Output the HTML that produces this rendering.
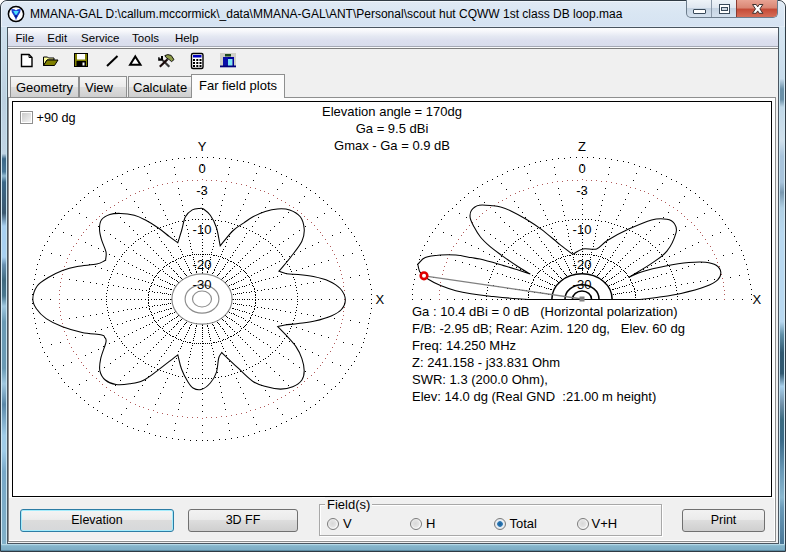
<!DOCTYPE html>
<html><head><meta charset="utf-8">
<style>
*{margin:0;padding:0;box-sizing:border-box}
html,body{width:786px;height:552px;overflow:hidden;background:#fff}
body{position:relative;font-family:"Liberation Sans",sans-serif;color:#000}
.abs{position:absolute}
#frame{position:absolute;left:0;top:0;width:786px;height:552px;border-radius:7px 7px 0 0;background:linear-gradient(to bottom,#e0eaf5 0,#d9e6f3 12px,#d6e3f2 25px,#eaf2fa 26px,#eaf2fa 27px);border:1px solid #2f3a44;overflow:hidden}
#frame .hl{position:absolute;left:0;top:0;right:0;bottom:0;border:1px solid #eef5fb;border-radius:6px 6px 0 0}
.fl{position:absolute;top:27px;width:6px;height:517px}
#fb{position:absolute;left:1px;top:544px;width:784px;height:7px;background:linear-gradient(to bottom,#c4e4f0 0,#86b6cc 25%,#7eaec6 80%,#4a7890 100%)}
#client{position:absolute;left:7px;top:27px;width:772px;height:517px;background:#f0f0f0;border:1px solid #4a5560}
#title{position:absolute;left:30px;top:7px;font-size:12px;color:#000;white-space:nowrap;letter-spacing:0}
#menubar{position:absolute;left:8px;top:28px;width:770px;height:21px;
 background:linear-gradient(to bottom,#fefefe 0,#f6f7fb 15%,#e4e8f2 40%,#dcdfee 60%,#d9ddec 85%,#a4a8b4 85.7%,#a4a8b4 90.4%,#fafafa 90.5%,#fafafa 95.2%,#7c7c7c 95.3%,#7c7c7c 100%)}
.mi{position:absolute;top:4px;font-size:11.5px;color:#000;white-space:nowrap}
.tab{position:absolute;top:76px;height:21px;border:1px solid #8e8f8f;border-bottom:none;
 background:linear-gradient(to bottom,#f6f6f6 0,#ebebeb 50%,#dddddd 51%,#cfcfcf 100%);font-size:13px;padding-top:2px;white-space:nowrap}
.tab span{position:absolute;top:3px}
#tabsel{position:absolute;top:74px;height:24px;left:191px;width:94px;border:1px solid #8e8f8f;border-bottom:none;background:#fcfcfc;font-size:13px;z-index:3}
#page{position:absolute;left:8px;top:97px;width:768px;height:445px;border:1px solid #8e8f8f;background:linear-gradient(to bottom,#fdfdfd 0,#fdfdfd 400px,#f0f0f0 400px,#f0f0f0 100%);box-shadow:inset -1px -1px 0 #fff}
#panel{position:absolute;left:12px;top:101px;width:760px;height:396px;border:1px solid #000;background:#fff}
svg{position:absolute;left:0;top:0}
.lbl{position:absolute;width:60px;text-align:center;font-size:13px;line-height:15px;background:transparent}
.lblx{position:absolute;font-size:13px;line-height:15px}
.hdr{position:absolute;left:292px;width:200px;text-align:center;font-size:13px;line-height:15px;white-space:nowrap}
.info{position:absolute;left:412px;font-size:13px;line-height:15px;white-space:nowrap}
.btn{position:absolute;top:509px;height:23px;border:1px solid #707070;border-radius:3px;
 background:linear-gradient(to bottom,#f2f2f2 0,#ebebeb 45%,#dddddd 50%,#cfcfcf 100%);font-size:12.5px;text-align:center;line-height:20px}
.radio{position:absolute;top:517.5px;width:12px;height:12px;border-radius:50%;border:1px solid #7a7a7a;background:radial-gradient(circle at 45% 45%,#d8d8d8 0,#e4e4e4 45%,#f8f8f8 62%,#f0f0f0 100%)}
.rl{position:absolute;top:516px;font-size:13px;line-height:15px}
</style></head><body>
<div id="frame"><div class="hl"></div></div>
<div class="fl" style="left:1px;border-left:1px solid #d0e6f2;border-right:1px solid #c8e4f0;background:linear-gradient(to bottom,#d0e0ee 0,#bcd0e0 14%,#c0d4e4 24.5%,#3c6888 25.5%,#4a7898 28%,#90b8d0 28.8%,#3c6888 30%,#3a5870 36%,#a8d0f0 38.5%,#a8d0f0 44.5%,#6890b0 46%,#406a80 49%,#4a7890 52%,#a0c8e0 54%,#6a9ab4 57%,#6a9ab4 66%,#a0c8e0 69%,#5a88a8 73%,#a0cce8 79%,#a0cce8 82%,#78a8c8 86%,#80b0c8 100%)"></div>
<div class="fl" style="left:779px;border-left:1px solid #c8e4f0;border-right:1px solid #d0e6f2;background:linear-gradient(to bottom,#d8e6f2 0,#c8dcec 10%,#6a90a8 12%,#6a90a8 14%,#c0d8e8 15.5%,#d0e0ec 22%,#a8c4dc 25%,#a8c4dc 30%,#7898b0 32%,#b0d0e4 35%,#b8d8f0 40%,#b8d8f0 57%,#6090a8 59.5%,#305870 63%,#305870 67%,#a8d0ec 69.5%,#7090a8 73%,#3a6a80 76%,#3a6a88 80%,#6a9ab8 86%,#8ab8d0 91%,#6a9ab8 93%,#4a7898 100%)"></div>
<div id="fb"></div>
<!-- app icon -->
<svg width="786" height="552" style="z-index:1">
 <circle cx="16" cy="14" r="7.6" fill="#fff" stroke="#000" stroke-width="1.5"/>
 <path d="M11.3,9 L14.3,9.3 L16,10.6 L17.7,9.3 L20.7,9 L20.2,12.3 L17.2,17.2 L16,20.2 L14.8,17.2 L11.8,12.3 Z" fill="#1a3fd0"/>
 <path d="M13.2,11 L18.8,11 L16.6,14.8 L15.4,14.8 Z" fill="#48e0ff"/>
 <circle cx="16" cy="16.3" r="1.2" fill="#0a1a80"/>
</svg>
<div id="title">MMANA-GAL D:\callum.mccormick\_data\MMANA-GAL\ANT\Personal\scout hut CQWW 1st class DB loop.maa</div>
<!-- caption buttons -->
<div class="abs" style="left:686px;top:0;width:92px;height:18px;border:1px solid #6c7c8c;border-top:none;border-radius:0 0 5px 5px;overflow:hidden;background:linear-gradient(to bottom,#eef3f8 0,#dfe7f0 45%,#c5d3e2 50%,#d5e1ee 100%)">
 <div class="abs" style="left:24px;top:0;width:1px;height:18px;background:#8a98a8"></div>
 <div class="abs" style="left:49px;top:0;width:43px;height:18px;border-left:1px solid #8a3a30;background:linear-gradient(to bottom,#e8a393 0,#d98573 45%,#c44a36 50%,#d9735d 100%)"></div>
 <div class="abs" style="left:6px;top:9px;width:13px;height:5px;background:#fff;border:1px solid #3a4a5a;border-radius:1px"></div>
 <div class="abs" style="left:32px;top:4px;width:11px;height:10px;background:#fff;border:1px solid #3a4a5a"></div>
 <div class="abs" style="left:34px;top:7px;width:7px;height:4px;background:#cfd8e2;border:1px solid #3a4a5a"></div>
</div>
<svg width="786" height="552" style="z-index:2">
  <path d="M752.5,4.5 H756.2 L757.7,6.9 L759.2,4.5 H762.9 L759.9,8.9 L762.9,13.3 H759.2 L757.7,10.9 L756.2,13.3 H752.5 L755.5,8.9 Z" fill="#fff" stroke="#40302e" stroke-width="1"/>
</svg>
<div id="client"></div>
<div id="menubar">
 <div class="mi" style="left:7.5px">File</div>
 <div class="mi" style="left:39.3px">Edit</div>
 <div class="mi" style="left:73.1px">Service</div>
 <div class="mi" style="left:124.1px">Tools</div>
 <div class="mi" style="left:166.9px">Help</div>
</div>
<!-- toolbar icons -->
<svg width="786" height="552" style="z-index:2">
 <!-- new -->
 <path d="M21.5,54.5 H29 L32,57.5 V66.5 H21.5 Z" fill="#fff" stroke="#000" stroke-width="1.4"/>
 <path d="M29,54.5 V57.5 H32" fill="none" stroke="#000" stroke-width="1"/>
 <!-- open -->
 <path d="M43.5,57 H47.5 L48.5,58 H54 V60 H47 L43.5,65.5 Z" fill="#ffff99" stroke="#000" stroke-width="1"/>
 <path d="M43.5,65.5 L47,60 H58 L54.5,65.5 Z" fill="#808000" stroke="#000" stroke-width="1"/>
 <!-- save -->
 <rect x="74.5" y="53.5" width="13" height="13" fill="#808000" stroke="#000" stroke-width="1"/>
 <rect x="77" y="54" width="8" height="5.5" fill="#fff"/>
 <rect x="76.5" y="61" width="9.5" height="5.5" fill="#000"/>
 <rect x="82.5" y="62.5" width="2" height="3" fill="#fff"/>
 <!-- line -->
 <path d="M107,66 L117.5,56" stroke="#000" stroke-width="2"/>
 <!-- triangle -->
 <path d="M135.3,56.5 L140.5,64.8 H130.1 Z" fill="#fff" stroke="#000" stroke-width="2"/>
 <!-- hammer & wrench -->
 <path d="M162.8,60.3 L169.3,66.8" stroke="#3a3a3a" stroke-width="2.2"/>
 <path d="M158.2,57.2 H159.6 V58.6 H161 V56 H163 V60.8 H158.2 Z" fill="#000"/>
 <path d="M167.6,59.2 L159.8,66.8" stroke="#1a0a0a" stroke-width="2.2"/>
 <path d="M164.8,55.6 L167.8,54.6 L171.2,55.4 L174,59.6 L171.6,61.6 L169.4,59.8 L166.2,57.6 Z" fill="#8c9a48" stroke="#000" stroke-width="0.9"/>
<!-- calc -->
 <rect x="191.5" y="53.5" width="11.5" height="15" rx="1.5" fill="#fff" stroke="#000" stroke-width="1.4"/>
 <rect x="193" y="55" width="8.5" height="2.5" fill="#0000c0"/>
 <g fill="#000"><rect x="193" y="59" width="2" height="2"/><rect x="196.3" y="59" width="2" height="2"/><rect x="199.5" y="59" width="2" height="2"/>
 <rect x="193" y="62" width="2" height="2"/><rect x="196.3" y="62" width="2" height="2"/><rect x="199.5" y="62" width="2" height="2"/>
 <rect x="193" y="65" width="2" height="2"/><rect x="196.3" y="65" width="2" height="2"/><rect x="199.5" y="65" width="2" height="2"/></g>
 <!-- exit -->
 <rect x="220" y="53" width="16" height="13" fill="#cfcfc6"/>
 <rect x="225" y="54" width="6" height="2.5" fill="#1e4a1e"/>
 <rect x="223" y="57" width="11" height="2" fill="#00009a"/>
 <rect x="223" y="57" width="5" height="9" fill="#0a10a8"/>
 <rect x="228" y="59" width="4.5" height="7" fill="#7ee6f4"/>
 <rect x="232.5" y="59" width="1.5" height="7" fill="#00009a"/>
 <rect x="220" y="65.5" width="16" height="1.8" fill="#00007a"/>
</svg>
<!-- tabs -->
<div id="page"></div>
<div class="tab" style="left:10px;width:69px"><span style="left:5px">Geometry</span></div>
<div class="tab" style="left:79px;width:48px"><span style="left:5px">View</span></div>
<div class="tab" style="left:128px;width:64px"><span style="left:4px">Calculate</span></div>
<div id="tabsel"><span class="abs" style="left:7px;top:3px">Far field plots</span></div>
<div id="panel"></div>
<svg width="786" height="552" style="z-index:4">
<path d="M32 289h1v1h-1zM32 294h1v1h-1zM32 299h1v1h-1zM32 303h1v1h-1zM32 308h1v1h-1zM33 284h1v1h-1zM33 313h1v1h-1zM34 279h1v1h-1zM34 318h1v1h-1zM35 274h1v1h-1zM35 323h1v1h-1zM36 269h1v1h-1zM36 328h1v1h-1zM37 264h1v1h-1zM37 333h1v1h-1zM39 259h1v1h-1zM39 338h1v1h-1zM40 255h1v1h-1zM40 342h1v1h-1zM41 299h1v1h-1zM42 250h1v1h-1zM42 347h1v1h-1zM44 245h1v1h-1zM44 275h1v1h-1zM44 322h1v1h-1zM44 352h1v1h-1zM47 241h1v1h-1zM47 356h1v1h-1zM49 236h1v1h-1zM49 361h1v1h-1zM50 299h1v1h-1zM51 253h1v1h-1zM51 344h1v1h-1zM52 232h1v1h-1zM52 365h1v1h-1zM53 277h1v1h-1zM53 320h1v1h-1zM55 228h1v1h-1zM55 369h1v1h-1zM58 224h1v1h-1zM58 373h1v1h-1zM59 299h1v1h-1zM60 255h1v1h-1zM60 342h1v1h-1zM61 219h1v1h-1zM61 278h1v1h-1zM61 319h1v1h-1zM61 378h1v1h-1zM63 232h1v1h-1zM63 365h1v1h-1zM64 215h1v1h-1zM64 382h1v1h-1zM67 258h1v1h-1zM67 299h1v1h-1zM67 339h1v1h-1zM68 211h1v1h-1zM68 386h1v1h-1zM69 279h1v1h-1zM69 318h1v1h-1zM71 235h1v1h-1zM71 362h1v1h-1zM72 208h1v1h-1zM72 389h1v1h-1zM74 299h1v1h-1zM75 260h1v1h-1zM75 337h1v1h-1zM76 204h1v1h-1zM76 280h1v1h-1zM76 317h1v1h-1zM76 393h1v1h-1zM78 239h1v1h-1zM78 358h1v1h-1zM79 213h1v1h-1zM79 384h1v1h-1zM80 200h1v1h-1zM80 397h1v1h-1zM82 262h1v1h-1zM82 299h1v1h-1zM82 335h1v1h-1zM83 281h1v1h-1zM83 316h1v1h-1zM84 197h1v1h-1zM84 400h1v1h-1zM85 242h1v1h-1zM85 355h1v1h-1zM86 217h1v1h-1zM86 380h1v1h-1zM88 193h1v1h-1zM88 299h1v1h-1zM88 404h1v1h-1zM89 264h1v1h-1zM89 333h1v1h-1zM90 282h1v1h-1zM90 315h1v1h-1zM91 245h1v1h-1zM91 352h1v1h-1zM92 222h1v1h-1zM92 375h1v1h-1zM93 190h1v1h-1zM93 407h1v1h-1zM95 266h1v1h-1zM95 299h1v1h-1zM95 331h1v1h-1zM96 283h1v1h-1zM96 314h1v1h-1zM97 187h1v1h-1zM97 410h1v1h-1zM98 226h1v1h-1zM98 248h1v1h-1zM98 349h1v1h-1zM98 371h1v1h-1zM99 196h1v1h-1zM99 401h1v1h-1zM101 268h1v1h-1zM101 299h1v1h-1zM101 329h1v1h-1zM102 184h1v1h-1zM102 284h1v1h-1zM102 313h1v1h-1zM102 413h1v1h-1zM103 251h1v1h-1zM103 346h1v1h-1zM104 202h1v1h-1zM104 230h1v1h-1zM104 367h1v1h-1zM104 395h1v1h-1zM106 293h1v1h-1zM106 296h1v1h-1zM106 299h1v1h-1zM106 301h1v1h-1zM106 304h1v1h-1zM107 181h1v1h-1zM107 270h1v1h-1zM107 287h1v1h-1zM107 290h1v1h-1zM107 307h1v1h-1zM107 310h1v1h-1zM107 327h1v1h-1zM107 416h1v1h-1zM108 282h1v1h-1zM108 285h1v1h-1zM108 312h1v1h-1zM108 315h1v1h-1zM109 254h1v1h-1zM109 279h1v1h-1zM109 318h1v1h-1zM109 343h1v1h-1zM110 207h1v1h-1zM110 234h1v1h-1zM110 277h1v1h-1zM110 320h1v1h-1zM110 363h1v1h-1zM110 390h1v1h-1zM111 274h1v1h-1zM111 323h1v1h-1zM112 179h1v1h-1zM112 271h1v1h-1zM112 299h1v1h-1zM112 326h1v1h-1zM112 418h1v1h-1zM113 269h1v1h-1zM113 285h1v1h-1zM113 312h1v1h-1zM113 328h1v1h-1zM114 256h1v1h-1zM114 266h1v1h-1zM114 331h1v1h-1zM114 341h1v1h-1zM115 212h1v1h-1zM115 238h1v1h-1zM115 359h1v1h-1zM115 385h1v1h-1zM116 264h1v1h-1zM116 333h1v1h-1zM117 176h1v1h-1zM117 261h1v1h-1zM117 273h1v1h-1zM117 299h1v1h-1zM117 324h1v1h-1zM117 336h1v1h-1zM117 421h1v1h-1zM118 286h1v1h-1zM118 311h1v1h-1zM119 259h1v1h-1zM119 338h1v1h-1zM120 217h1v1h-1zM120 241h1v1h-1zM120 356h1v1h-1zM120 380h1v1h-1zM121 183h1v1h-1zM121 256h1v1h-1zM121 299h1v1h-1zM121 341h1v1h-1zM121 414h1v1h-1zM122 174h1v1h-1zM122 254h1v1h-1zM122 274h1v1h-1zM122 323h1v1h-1zM122 343h1v1h-1zM122 423h1v1h-1zM123 287h1v1h-1zM123 310h1v1h-1zM124 222h1v1h-1zM124 244h1v1h-1zM124 252h1v1h-1zM124 261h1v1h-1zM124 336h1v1h-1zM124 345h1v1h-1zM124 353h1v1h-1zM124 375h1v1h-1zM126 189h1v1h-1zM126 250h1v1h-1zM126 276h1v1h-1zM126 299h1v1h-1zM126 321h1v1h-1zM126 347h1v1h-1zM126 408h1v1h-1zM127 171h1v1h-1zM127 288h1v1h-1zM127 309h1v1h-1zM127 426h1v1h-1zM128 247h1v1h-1zM128 263h1v1h-1zM128 334h1v1h-1zM128 350h1v1h-1zM129 226h1v1h-1zM129 371h1v1h-1zM130 195h1v1h-1zM130 277h1v1h-1zM130 299h1v1h-1zM130 320h1v1h-1zM130 402h1v1h-1zM131 245h1v1h-1zM131 288h1v1h-1zM131 309h1v1h-1zM131 352h1v1h-1zM132 265h1v1h-1zM132 332h1v1h-1zM133 169h1v1h-1zM133 230h1v1h-1zM133 243h1v1h-1zM133 250h1v1h-1zM133 347h1v1h-1zM133 354h1v1h-1zM133 367h1v1h-1zM133 428h1v1h-1zM134 201h1v1h-1zM134 278h1v1h-1zM134 299h1v1h-1zM134 319h1v1h-1zM134 396h1v1h-1zM135 241h1v1h-1zM135 289h1v1h-1zM135 308h1v1h-1zM135 356h1v1h-1zM136 253h1v1h-1zM136 267h1v1h-1zM136 330h1v1h-1zM136 344h1v1h-1zM137 234h1v1h-1zM137 363h1v1h-1zM138 167h1v1h-1zM138 207h1v1h-1zM138 239h1v1h-1zM138 279h1v1h-1zM138 299h1v1h-1zM138 318h1v1h-1zM138 358h1v1h-1zM138 390h1v1h-1zM138 430h1v1h-1zM139 289h1v1h-1zM139 308h1v1h-1zM140 238h1v1h-1zM140 255h1v1h-1zM140 269h1v1h-1zM140 328h1v1h-1zM140 342h1v1h-1zM140 359h1v1h-1zM141 299h1v1h-1zM142 212h1v1h-1zM142 280h1v1h-1zM142 290h1v1h-1zM142 307h1v1h-1zM142 317h1v1h-1zM142 385h1v1h-1zM143 236h1v1h-1zM143 270h1v1h-1zM143 327h1v1h-1zM143 361h1v1h-1zM144 166h1v1h-1zM144 241h1v1h-1zM144 258h1v1h-1zM144 339h1v1h-1zM144 356h1v1h-1zM144 431h1v1h-1zM145 217h1v1h-1zM145 234h1v1h-1zM145 281h1v1h-1zM145 299h1v1h-1zM145 316h1v1h-1zM145 363h1v1h-1zM145 380h1v1h-1zM146 272h1v1h-1zM146 290h1v1h-1zM146 307h1v1h-1zM146 325h1v1h-1zM147 173h1v1h-1zM147 244h1v1h-1zM147 260h1v1h-1zM147 337h1v1h-1zM147 353h1v1h-1zM147 424h1v1h-1zM148 221h1v1h-1zM148 233h1v1h-1zM148 282h1v1h-1zM148 292h1v1h-1zM148 294h1v1h-1zM148 295h1v1h-1zM148 297h1v1h-1zM148 299h1v1h-1zM148 300h1v1h-1zM148 302h1v1h-1zM148 303h1v1h-1zM148 305h1v1h-1zM148 315h1v1h-1zM148 364h1v1h-1zM148 376h1v1h-1zM149 164h1v1h-1zM149 273h1v1h-1zM149 288h1v1h-1zM149 289h1v1h-1zM149 291h1v1h-1zM149 306h1v1h-1zM149 308h1v1h-1zM149 309h1v1h-1zM149 324h1v1h-1zM149 433h1v1h-1zM150 180h1v1h-1zM150 247h1v1h-1zM150 262h1v1h-1zM150 286h1v1h-1zM150 311h1v1h-1zM150 335h1v1h-1zM150 350h1v1h-1zM150 417h1v1h-1zM151 226h1v1h-1zM151 231h1v1h-1zM151 283h1v1h-1zM151 285h1v1h-1zM151 299h1v1h-1zM151 312h1v1h-1zM151 314h1v1h-1zM151 366h1v1h-1zM151 371h1v1h-1zM152 275h1v1h-1zM152 282h1v1h-1zM152 291h1v1h-1zM152 306h1v1h-1zM152 315h1v1h-1zM152 322h1v1h-1zM153 187h1v1h-1zM153 250h1v1h-1zM153 264h1v1h-1zM153 279h1v1h-1zM153 280h1v1h-1zM153 317h1v1h-1zM153 318h1v1h-1zM153 333h1v1h-1zM153 347h1v1h-1zM153 410h1v1h-1zM154 230h1v1h-1zM154 277h1v1h-1zM154 284h1v1h-1zM154 292h1v1h-1zM154 299h1v1h-1zM154 305h1v1h-1zM154 313h1v1h-1zM154 320h1v1h-1zM154 367h1v1h-1zM155 162h1v1h-1zM155 193h1v1h-1zM155 266h1v1h-1zM155 276h1v1h-1zM155 321h1v1h-1zM155 331h1v1h-1zM155 404h1v1h-1zM155 435h1v1h-1zM156 253h1v1h-1zM156 275h1v1h-1zM156 299h1v1h-1zM156 322h1v1h-1zM156 344h1v1h-1zM157 228h1v1h-1zM157 233h1v1h-1zM157 273h1v1h-1zM157 285h1v1h-1zM157 292h1v1h-1zM157 305h1v1h-1zM157 312h1v1h-1zM157 324h1v1h-1zM157 364h1v1h-1zM157 369h1v1h-1zM158 199h1v1h-1zM158 255h1v1h-1zM158 268h1v1h-1zM158 272h1v1h-1zM158 277h1v1h-1zM158 320h1v1h-1zM158 325h1v1h-1zM158 329h1v1h-1zM158 342h1v1h-1zM158 398h1v1h-1zM159 237h1v1h-1zM159 271h1v1h-1zM159 286h1v1h-1zM159 299h1v1h-1zM159 311h1v1h-1zM159 326h1v1h-1zM159 360h1v1h-1zM160 161h1v1h-1zM160 204h1v1h-1zM160 227h1v1h-1zM160 270h1v1h-1zM160 279h1v1h-1zM160 292h1v1h-1zM160 305h1v1h-1zM160 318h1v1h-1zM160 327h1v1h-1zM160 370h1v1h-1zM160 393h1v1h-1zM160 436h1v1h-1zM161 241h1v1h-1zM161 258h1v1h-1zM161 286h1v1h-1zM161 299h1v1h-1zM161 311h1v1h-1zM161 339h1v1h-1zM161 356h1v1h-1zM162 269h1v1h-1zM162 280h1v1h-1zM162 293h1v1h-1zM162 304h1v1h-1zM162 317h1v1h-1zM162 328h1v1h-1zM163 210h1v1h-1zM163 226h1v1h-1zM163 260h1v1h-1zM163 267h1v1h-1zM163 271h1v1h-1zM163 326h1v1h-1zM163 330h1v1h-1zM163 337h1v1h-1zM163 371h1v1h-1zM163 387h1v1h-1zM164 244h1v1h-1zM164 266h1v1h-1zM164 287h1v1h-1zM164 293h1v1h-1zM164 299h1v1h-1zM164 304h1v1h-1zM164 310h1v1h-1zM164 331h1v1h-1zM164 353h1v1h-1zM165 215h1v1h-1zM165 262h1v1h-1zM165 273h1v1h-1zM165 281h1v1h-1zM165 316h1v1h-1zM165 324h1v1h-1zM165 335h1v1h-1zM165 382h1v1h-1zM166 160h1v1h-1zM166 225h1v1h-1zM166 247h1v1h-1zM166 265h1v1h-1zM166 288h1v1h-1zM166 293h1v1h-1zM166 299h1v1h-1zM166 304h1v1h-1zM166 309h1v1h-1zM166 332h1v1h-1zM166 350h1v1h-1zM166 372h1v1h-1zM166 437h1v1h-1zM167 219h1v1h-1zM167 264h1v1h-1zM167 274h1v1h-1zM167 282h1v1h-1zM167 315h1v1h-1zM167 323h1v1h-1zM167 333h1v1h-1zM167 378h1v1h-1zM168 250h1v1h-1zM168 288h1v1h-1zM168 294h1v1h-1zM168 299h1v1h-1zM168 303h1v1h-1zM168 309h1v1h-1zM168 347h1v1h-1zM169 224h1v1h-1zM169 263h1v1h-1zM169 266h1v1h-1zM169 276h1v1h-1zM169 283h1v1h-1zM169 314h1v1h-1zM169 321h1v1h-1zM169 331h1v1h-1zM169 334h1v1h-1zM169 373h1v1h-1zM170 252h1v1h-1zM170 262h1v1h-1zM170 284h1v1h-1zM170 289h1v1h-1zM170 294h1v1h-1zM170 299h1v1h-1zM170 303h1v1h-1zM170 308h1v1h-1zM170 313h1v1h-1zM170 335h1v1h-1zM170 345h1v1h-1zM171 228h1v1h-1zM171 255h1v1h-1zM171 268h1v1h-1zM171 277h1v1h-1zM171 289h1v1h-1zM171 299h1v1h-1zM171 308h1v1h-1zM171 320h1v1h-1zM171 329h1v1h-1zM171 342h1v1h-1zM171 369h1v1h-1zM172 159h1v1h-1zM172 223h1v1h-1zM172 232h1v1h-1zM172 261h1v1h-1zM172 278h1v1h-1zM172 284h1v1h-1zM172 294h1v1h-1zM172 303h1v1h-1zM172 313h1v1h-1zM172 319h1v1h-1zM172 336h1v1h-1zM172 365h1v1h-1zM172 374h1v1h-1zM172 438h1v1h-1zM173 257h1v1h-1zM173 261h1v1h-1zM173 270h1v1h-1zM173 290h1v1h-1zM173 307h1v1h-1zM173 327h1v1h-1zM173 336h1v1h-1zM173 340h1v1h-1zM174 167h1v1h-1zM174 236h1v1h-1zM174 271h1v1h-1zM174 279h1v1h-1zM174 285h1v1h-1zM174 312h1v1h-1zM174 318h1v1h-1zM174 326h1v1h-1zM174 361h1v1h-1zM174 430h1v1h-1zM175 174h1v1h-1zM175 222h1v1h-1zM175 260h1v1h-1zM175 286h1v1h-1zM175 311h1v1h-1zM175 337h1v1h-1zM175 375h1v1h-1zM175 423h1v1h-1zM176 239h1v1h-1zM176 259h1v1h-1zM176 262h1v1h-1zM176 273h1v1h-1zM176 280h1v1h-1zM176 317h1v1h-1zM176 324h1v1h-1zM176 335h1v1h-1zM176 338h1v1h-1zM176 358h1v1h-1zM177 181h1v1h-1zM177 242h1v1h-1zM177 274h1v1h-1zM177 281h1v1h-1zM177 316h1v1h-1zM177 323h1v1h-1zM177 355h1v1h-1zM177 416h1v1h-1zM178 158h1v1h-1zM178 188h1v1h-1zM178 221h1v1h-1zM178 246h1v1h-1zM178 258h1v1h-1zM178 264h1v1h-1zM178 276h1v1h-1zM178 282h1v1h-1zM178 315h1v1h-1zM178 321h1v1h-1zM178 333h1v1h-1zM178 339h1v1h-1zM178 351h1v1h-1zM178 376h1v1h-1zM178 409h1v1h-1zM178 439h1v1h-1zM179 194h1v1h-1zM179 266h1v1h-1zM179 331h1v1h-1zM179 403h1v1h-1zM180 249h1v1h-1zM180 258h1v1h-1zM180 268h1v1h-1zM180 277h1v1h-1zM180 320h1v1h-1zM180 329h1v1h-1zM180 339h1v1h-1zM180 348h1v1h-1zM181 200h1v1h-1zM181 251h1v1h-1zM181 257h1v1h-1zM181 269h1v1h-1zM181 278h1v1h-1zM181 319h1v1h-1zM181 328h1v1h-1zM181 340h1v1h-1zM181 346h1v1h-1zM181 397h1v1h-1zM182 205h1v1h-1zM182 221h1v1h-1zM182 254h1v1h-1zM182 279h1v1h-1zM182 318h1v1h-1zM182 343h1v1h-1zM182 376h1v1h-1zM182 392h1v1h-1zM183 211h1v1h-1zM183 256h1v1h-1zM183 271h1v1h-1zM183 326h1v1h-1zM183 341h1v1h-1zM183 386h1v1h-1zM184 158h1v1h-1zM184 215h1v1h-1zM184 259h1v1h-1zM184 273h1v1h-1zM184 324h1v1h-1zM184 338h1v1h-1zM184 382h1v1h-1zM184 439h1v1h-1zM185 220h1v1h-1zM185 256h1v1h-1zM185 261h1v1h-1zM185 274h1v1h-1zM185 323h1v1h-1zM185 336h1v1h-1zM185 341h1v1h-1zM185 377h1v1h-1zM186 225h1v1h-1zM186 263h1v1h-1zM186 275h1v1h-1zM186 277h1v1h-1zM186 320h1v1h-1zM186 322h1v1h-1zM186 334h1v1h-1zM186 372h1v1h-1zM187 229h1v1h-1zM187 255h1v1h-1zM187 265h1v1h-1zM187 332h1v1h-1zM187 342h1v1h-1zM187 368h1v1h-1zM188 220h1v1h-1zM188 233h1v1h-1zM188 236h1v1h-1zM188 267h1v1h-1zM188 330h1v1h-1zM188 361h1v1h-1zM188 364h1v1h-1zM188 377h1v1h-1zM189 240h1v1h-1zM189 255h1v1h-1zM189 269h1v1h-1zM189 270h1v1h-1zM189 327h1v1h-1zM189 328h1v1h-1zM189 342h1v1h-1zM189 357h1v1h-1zM190 157h1v1h-1zM190 243h1v1h-1zM190 246h1v1h-1zM190 255h1v1h-1zM190 272h1v1h-1zM190 325h1v1h-1zM190 342h1v1h-1zM190 351h1v1h-1zM190 354h1v1h-1zM190 440h1v1h-1zM191 249h1v1h-1zM191 273h1v1h-1zM191 275h1v1h-1zM191 322h1v1h-1zM191 324h1v1h-1zM191 348h1v1h-1zM192 219h1v1h-1zM192 252h1v1h-1zM192 254h1v1h-1zM192 343h1v1h-1zM192 345h1v1h-1zM192 378h1v1h-1zM193 257h1v1h-1zM193 259h1v1h-1zM193 338h1v1h-1zM193 340h1v1h-1zM194 254h1v1h-1zM194 261h1v1h-1zM194 263h1v1h-1zM194 334h1v1h-1zM194 336h1v1h-1zM194 343h1v1h-1zM195 219h1v1h-1zM195 265h1v1h-1zM195 267h1v1h-1zM195 269h1v1h-1zM195 328h1v1h-1zM195 330h1v1h-1zM195 332h1v1h-1zM195 378h1v1h-1zM196 157h1v1h-1zM196 254h1v1h-1zM196 271h1v1h-1zM196 272h1v1h-1zM196 274h1v1h-1zM196 323h1v1h-1zM196 325h1v1h-1zM196 326h1v1h-1zM196 343h1v1h-1zM196 440h1v1h-1zM198 219h1v1h-1zM198 254h1v1h-1zM198 343h1v1h-1zM198 378h1v1h-1zM200 254h1v1h-1zM200 343h1v1h-1zM202 157h1v1h-1zM202 165h1v1h-1zM202 172h1v1h-1zM202 179h1v1h-1zM202 186h1v1h-1zM202 192h1v1h-1zM202 198h1v1h-1zM202 204h1v1h-1zM202 209h1v1h-1zM202 214h1v1h-1zM202 219h1v1h-1zM202 223h1v1h-1zM202 228h1v1h-1zM202 232h1v1h-1zM202 235h1v1h-1zM202 239h1v1h-1zM202 242h1v1h-1zM202 245h1v1h-1zM202 248h1v1h-1zM202 251h1v1h-1zM202 254h1v1h-1zM202 256h1v1h-1zM202 259h1v1h-1zM202 261h1v1h-1zM202 263h1v1h-1zM202 265h1v1h-1zM202 267h1v1h-1zM202 269h1v1h-1zM202 270h1v1h-1zM202 272h1v1h-1zM202 273h1v1h-1zM202 324h1v1h-1zM202 325h1v1h-1zM202 327h1v1h-1zM202 328h1v1h-1zM202 330h1v1h-1zM202 332h1v1h-1zM202 334h1v1h-1zM202 336h1v1h-1zM202 338h1v1h-1zM202 341h1v1h-1zM202 343h1v1h-1zM202 346h1v1h-1zM202 349h1v1h-1zM202 352h1v1h-1zM202 355h1v1h-1zM202 358h1v1h-1zM202 362h1v1h-1zM202 365h1v1h-1zM202 369h1v1h-1zM202 374h1v1h-1zM202 378h1v1h-1zM202 383h1v1h-1zM202 388h1v1h-1zM202 393h1v1h-1zM202 399h1v1h-1zM202 405h1v1h-1zM202 411h1v1h-1zM202 418h1v1h-1zM202 425h1v1h-1zM202 432h1v1h-1zM202 440h1v1h-1zM203 254h1v1h-1zM203 343h1v1h-1zM205 219h1v1h-1zM205 254h1v1h-1zM205 343h1v1h-1zM205 378h1v1h-1zM207 157h1v1h-1zM207 254h1v1h-1zM207 271h1v1h-1zM207 272h1v1h-1zM207 274h1v1h-1zM207 323h1v1h-1zM207 325h1v1h-1zM207 326h1v1h-1zM207 343h1v1h-1zM207 440h1v1h-1zM208 219h1v1h-1zM208 265h1v1h-1zM208 267h1v1h-1zM208 269h1v1h-1zM208 328h1v1h-1zM208 330h1v1h-1zM208 332h1v1h-1zM208 378h1v1h-1zM209 254h1v1h-1zM209 261h1v1h-1zM209 263h1v1h-1zM209 334h1v1h-1zM209 336h1v1h-1zM209 343h1v1h-1zM210 257h1v1h-1zM210 259h1v1h-1zM210 338h1v1h-1zM210 340h1v1h-1zM211 219h1v1h-1zM211 252h1v1h-1zM211 254h1v1h-1zM211 343h1v1h-1zM211 345h1v1h-1zM211 378h1v1h-1zM212 249h1v1h-1zM212 273h1v1h-1zM212 275h1v1h-1zM212 322h1v1h-1zM212 324h1v1h-1zM212 348h1v1h-1zM213 157h1v1h-1zM213 243h1v1h-1zM213 246h1v1h-1zM213 255h1v1h-1zM213 272h1v1h-1zM213 325h1v1h-1zM213 342h1v1h-1zM213 351h1v1h-1zM213 354h1v1h-1zM213 440h1v1h-1zM214 240h1v1h-1zM214 255h1v1h-1zM214 269h1v1h-1zM214 270h1v1h-1zM214 327h1v1h-1zM214 328h1v1h-1zM214 342h1v1h-1zM214 357h1v1h-1zM215 220h1v1h-1zM215 233h1v1h-1zM215 236h1v1h-1zM215 267h1v1h-1zM215 330h1v1h-1zM215 361h1v1h-1zM215 364h1v1h-1zM215 377h1v1h-1zM216 229h1v1h-1zM216 255h1v1h-1zM216 265h1v1h-1zM216 332h1v1h-1zM216 342h1v1h-1zM216 368h1v1h-1zM217 225h1v1h-1zM217 263h1v1h-1zM217 275h1v1h-1zM217 277h1v1h-1zM217 320h1v1h-1zM217 322h1v1h-1zM217 334h1v1h-1zM217 372h1v1h-1zM218 220h1v1h-1zM218 256h1v1h-1zM218 261h1v1h-1zM218 274h1v1h-1zM218 323h1v1h-1zM218 336h1v1h-1zM218 341h1v1h-1zM218 377h1v1h-1zM219 158h1v1h-1zM219 215h1v1h-1zM219 259h1v1h-1zM219 273h1v1h-1zM219 324h1v1h-1zM219 338h1v1h-1zM219 382h1v1h-1zM219 439h1v1h-1zM220 211h1v1h-1zM220 256h1v1h-1zM220 271h1v1h-1zM220 326h1v1h-1zM220 341h1v1h-1zM220 386h1v1h-1zM221 205h1v1h-1zM221 221h1v1h-1zM221 254h1v1h-1zM221 279h1v1h-1zM221 318h1v1h-1zM221 343h1v1h-1zM221 376h1v1h-1zM221 392h1v1h-1zM222 200h1v1h-1zM222 251h1v1h-1zM222 257h1v1h-1zM222 269h1v1h-1zM222 278h1v1h-1zM222 319h1v1h-1zM222 328h1v1h-1zM222 340h1v1h-1zM222 346h1v1h-1zM222 397h1v1h-1zM223 249h1v1h-1zM223 258h1v1h-1zM223 268h1v1h-1zM223 277h1v1h-1zM223 320h1v1h-1zM223 329h1v1h-1zM223 339h1v1h-1zM223 348h1v1h-1zM224 194h1v1h-1zM224 266h1v1h-1zM224 331h1v1h-1zM224 403h1v1h-1zM225 158h1v1h-1zM225 188h1v1h-1zM225 221h1v1h-1zM225 246h1v1h-1zM225 258h1v1h-1zM225 264h1v1h-1zM225 276h1v1h-1zM225 282h1v1h-1zM225 315h1v1h-1zM225 321h1v1h-1zM225 333h1v1h-1zM225 339h1v1h-1zM225 351h1v1h-1zM225 376h1v1h-1zM225 409h1v1h-1zM225 439h1v1h-1zM226 181h1v1h-1zM226 242h1v1h-1zM226 274h1v1h-1zM226 281h1v1h-1zM226 316h1v1h-1zM226 323h1v1h-1zM226 355h1v1h-1zM226 416h1v1h-1zM227 239h1v1h-1zM227 259h1v1h-1zM227 262h1v1h-1zM227 273h1v1h-1zM227 280h1v1h-1zM227 317h1v1h-1zM227 324h1v1h-1zM227 335h1v1h-1zM227 338h1v1h-1zM227 358h1v1h-1zM228 174h1v1h-1zM228 222h1v1h-1zM228 260h1v1h-1zM228 286h1v1h-1zM228 311h1v1h-1zM228 337h1v1h-1zM228 375h1v1h-1zM228 423h1v1h-1zM229 167h1v1h-1zM229 236h1v1h-1zM229 271h1v1h-1zM229 279h1v1h-1zM229 285h1v1h-1zM229 312h1v1h-1zM229 318h1v1h-1zM229 326h1v1h-1zM229 361h1v1h-1zM229 430h1v1h-1zM230 257h1v1h-1zM230 261h1v1h-1zM230 270h1v1h-1zM230 290h1v1h-1zM230 307h1v1h-1zM230 327h1v1h-1zM230 336h1v1h-1zM230 340h1v1h-1zM231 159h1v1h-1zM231 223h1v1h-1zM231 232h1v1h-1zM231 261h1v1h-1zM231 278h1v1h-1zM231 284h1v1h-1zM231 294h1v1h-1zM231 303h1v1h-1zM231 313h1v1h-1zM231 319h1v1h-1zM231 336h1v1h-1zM231 365h1v1h-1zM231 374h1v1h-1zM231 438h1v1h-1zM232 228h1v1h-1zM232 255h1v1h-1zM232 268h1v1h-1zM232 277h1v1h-1zM232 289h1v1h-1zM232 299h1v1h-1zM232 308h1v1h-1zM232 320h1v1h-1zM232 329h1v1h-1zM232 342h1v1h-1zM232 369h1v1h-1zM233 252h1v1h-1zM233 262h1v1h-1zM233 284h1v1h-1zM233 289h1v1h-1zM233 294h1v1h-1zM233 299h1v1h-1zM233 303h1v1h-1zM233 308h1v1h-1zM233 313h1v1h-1zM233 335h1v1h-1zM233 345h1v1h-1zM234 224h1v1h-1zM234 263h1v1h-1zM234 266h1v1h-1zM234 276h1v1h-1zM234 283h1v1h-1zM234 314h1v1h-1zM234 321h1v1h-1zM234 331h1v1h-1zM234 334h1v1h-1zM234 373h1v1h-1zM235 250h1v1h-1zM235 288h1v1h-1zM235 294h1v1h-1zM235 299h1v1h-1zM235 303h1v1h-1zM235 309h1v1h-1zM235 347h1v1h-1zM236 219h1v1h-1zM236 264h1v1h-1zM236 274h1v1h-1zM236 282h1v1h-1zM236 315h1v1h-1zM236 323h1v1h-1zM236 333h1v1h-1zM236 378h1v1h-1zM237 160h1v1h-1zM237 225h1v1h-1zM237 247h1v1h-1zM237 265h1v1h-1zM237 288h1v1h-1zM237 293h1v1h-1zM237 299h1v1h-1zM237 304h1v1h-1zM237 309h1v1h-1zM237 332h1v1h-1zM237 350h1v1h-1zM237 372h1v1h-1zM237 437h1v1h-1zM238 215h1v1h-1zM238 262h1v1h-1zM238 273h1v1h-1zM238 281h1v1h-1zM238 316h1v1h-1zM238 324h1v1h-1zM238 335h1v1h-1zM238 382h1v1h-1zM239 244h1v1h-1zM239 266h1v1h-1zM239 287h1v1h-1zM239 293h1v1h-1zM239 299h1v1h-1zM239 304h1v1h-1zM239 310h1v1h-1zM239 331h1v1h-1zM239 353h1v1h-1zM240 210h1v1h-1zM240 226h1v1h-1zM240 260h1v1h-1zM240 267h1v1h-1zM240 271h1v1h-1zM240 326h1v1h-1zM240 330h1v1h-1zM240 337h1v1h-1zM240 371h1v1h-1zM240 387h1v1h-1zM241 269h1v1h-1zM241 280h1v1h-1zM241 293h1v1h-1zM241 304h1v1h-1zM241 317h1v1h-1zM241 328h1v1h-1zM242 241h1v1h-1zM242 258h1v1h-1zM242 286h1v1h-1zM242 299h1v1h-1zM242 311h1v1h-1zM242 339h1v1h-1zM242 356h1v1h-1zM243 161h1v1h-1zM243 204h1v1h-1zM243 227h1v1h-1zM243 270h1v1h-1zM243 279h1v1h-1zM243 292h1v1h-1zM243 305h1v1h-1zM243 318h1v1h-1zM243 327h1v1h-1zM243 370h1v1h-1zM243 393h1v1h-1zM243 436h1v1h-1zM244 237h1v1h-1zM244 271h1v1h-1zM244 286h1v1h-1zM244 299h1v1h-1zM244 311h1v1h-1zM244 326h1v1h-1zM244 360h1v1h-1zM245 199h1v1h-1zM245 255h1v1h-1zM245 268h1v1h-1zM245 272h1v1h-1zM245 277h1v1h-1zM245 320h1v1h-1zM245 325h1v1h-1zM245 329h1v1h-1zM245 342h1v1h-1zM245 398h1v1h-1zM246 228h1v1h-1zM246 233h1v1h-1zM246 273h1v1h-1zM246 285h1v1h-1zM246 292h1v1h-1zM246 305h1v1h-1zM246 312h1v1h-1zM246 324h1v1h-1zM246 364h1v1h-1zM246 369h1v1h-1zM247 253h1v1h-1zM247 275h1v1h-1zM247 299h1v1h-1zM247 322h1v1h-1zM247 344h1v1h-1zM248 162h1v1h-1zM248 193h1v1h-1zM248 266h1v1h-1zM248 276h1v1h-1zM248 321h1v1h-1zM248 331h1v1h-1zM248 404h1v1h-1zM248 435h1v1h-1zM249 230h1v1h-1zM249 277h1v1h-1zM249 284h1v1h-1zM249 292h1v1h-1zM249 299h1v1h-1zM249 305h1v1h-1zM249 313h1v1h-1zM249 320h1v1h-1zM249 367h1v1h-1zM250 187h1v1h-1zM250 250h1v1h-1zM250 264h1v1h-1zM250 279h1v1h-1zM250 280h1v1h-1zM250 317h1v1h-1zM250 318h1v1h-1zM250 333h1v1h-1zM250 347h1v1h-1zM250 410h1v1h-1zM251 275h1v1h-1zM251 282h1v1h-1zM251 291h1v1h-1zM251 306h1v1h-1zM251 315h1v1h-1zM251 322h1v1h-1zM252 226h1v1h-1zM252 231h1v1h-1zM252 283h1v1h-1zM252 285h1v1h-1zM252 299h1v1h-1zM252 312h1v1h-1zM252 314h1v1h-1zM252 366h1v1h-1zM252 371h1v1h-1zM253 180h1v1h-1zM253 247h1v1h-1zM253 262h1v1h-1zM253 286h1v1h-1zM253 311h1v1h-1zM253 335h1v1h-1zM253 350h1v1h-1zM253 417h1v1h-1zM254 164h1v1h-1zM254 273h1v1h-1zM254 288h1v1h-1zM254 289h1v1h-1zM254 291h1v1h-1zM254 306h1v1h-1zM254 308h1v1h-1zM254 309h1v1h-1zM254 324h1v1h-1zM254 433h1v1h-1zM255 221h1v1h-1zM255 233h1v1h-1zM255 282h1v1h-1zM255 292h1v1h-1zM255 294h1v1h-1zM255 295h1v1h-1zM255 297h1v1h-1zM255 299h1v1h-1zM255 300h1v1h-1zM255 302h1v1h-1zM255 303h1v1h-1zM255 305h1v1h-1zM255 315h1v1h-1zM255 364h1v1h-1zM255 376h1v1h-1zM256 173h1v1h-1zM256 244h1v1h-1zM256 260h1v1h-1zM256 337h1v1h-1zM256 353h1v1h-1zM256 424h1v1h-1zM257 272h1v1h-1zM257 290h1v1h-1zM257 307h1v1h-1zM257 325h1v1h-1zM258 217h1v1h-1zM258 234h1v1h-1zM258 281h1v1h-1zM258 299h1v1h-1zM258 316h1v1h-1zM258 363h1v1h-1zM258 380h1v1h-1zM259 166h1v1h-1zM259 241h1v1h-1zM259 258h1v1h-1zM259 339h1v1h-1zM259 356h1v1h-1zM259 431h1v1h-1zM260 236h1v1h-1zM260 270h1v1h-1zM260 327h1v1h-1zM260 361h1v1h-1zM261 212h1v1h-1zM261 280h1v1h-1zM261 290h1v1h-1zM261 307h1v1h-1zM261 317h1v1h-1zM261 385h1v1h-1zM262 299h1v1h-1zM263 238h1v1h-1zM263 255h1v1h-1zM263 269h1v1h-1zM263 328h1v1h-1zM263 342h1v1h-1zM263 359h1v1h-1zM264 289h1v1h-1zM264 308h1v1h-1zM265 167h1v1h-1zM265 207h1v1h-1zM265 239h1v1h-1zM265 279h1v1h-1zM265 299h1v1h-1zM265 318h1v1h-1zM265 358h1v1h-1zM265 390h1v1h-1zM265 430h1v1h-1zM266 234h1v1h-1zM266 363h1v1h-1zM267 253h1v1h-1zM267 267h1v1h-1zM267 330h1v1h-1zM267 344h1v1h-1zM268 241h1v1h-1zM268 289h1v1h-1zM268 308h1v1h-1zM268 356h1v1h-1zM269 201h1v1h-1zM269 278h1v1h-1zM269 299h1v1h-1zM269 319h1v1h-1zM269 396h1v1h-1zM270 169h1v1h-1zM270 230h1v1h-1zM270 243h1v1h-1zM270 250h1v1h-1zM270 347h1v1h-1zM270 354h1v1h-1zM270 367h1v1h-1zM270 428h1v1h-1zM271 265h1v1h-1zM271 332h1v1h-1zM272 245h1v1h-1zM272 288h1v1h-1zM272 309h1v1h-1zM272 352h1v1h-1zM273 195h1v1h-1zM273 277h1v1h-1zM273 299h1v1h-1zM273 320h1v1h-1zM273 402h1v1h-1zM274 226h1v1h-1zM274 371h1v1h-1zM275 247h1v1h-1zM275 263h1v1h-1zM275 334h1v1h-1zM275 350h1v1h-1zM276 171h1v1h-1zM276 288h1v1h-1zM276 309h1v1h-1zM276 426h1v1h-1zM277 189h1v1h-1zM277 250h1v1h-1zM277 276h1v1h-1zM277 299h1v1h-1zM277 321h1v1h-1zM277 347h1v1h-1zM277 408h1v1h-1zM279 222h1v1h-1zM279 244h1v1h-1zM279 252h1v1h-1zM279 261h1v1h-1zM279 336h1v1h-1zM279 345h1v1h-1zM279 353h1v1h-1zM279 375h1v1h-1zM280 287h1v1h-1zM280 310h1v1h-1zM281 174h1v1h-1zM281 254h1v1h-1zM281 274h1v1h-1zM281 323h1v1h-1zM281 343h1v1h-1zM281 423h1v1h-1zM282 183h1v1h-1zM282 256h1v1h-1zM282 299h1v1h-1zM282 341h1v1h-1zM282 414h1v1h-1zM283 217h1v1h-1zM283 241h1v1h-1zM283 356h1v1h-1zM283 380h1v1h-1zM284 259h1v1h-1zM284 338h1v1h-1zM285 286h1v1h-1zM285 311h1v1h-1zM286 176h1v1h-1zM286 261h1v1h-1zM286 273h1v1h-1zM286 299h1v1h-1zM286 324h1v1h-1zM286 336h1v1h-1zM286 421h1v1h-1zM287 264h1v1h-1zM287 333h1v1h-1zM288 212h1v1h-1zM288 238h1v1h-1zM288 359h1v1h-1zM288 385h1v1h-1zM289 256h1v1h-1zM289 266h1v1h-1zM289 331h1v1h-1zM289 341h1v1h-1zM290 269h1v1h-1zM290 285h1v1h-1zM290 312h1v1h-1zM290 328h1v1h-1zM291 179h1v1h-1zM291 271h1v1h-1zM291 299h1v1h-1zM291 326h1v1h-1zM291 418h1v1h-1zM292 274h1v1h-1zM292 323h1v1h-1zM293 207h1v1h-1zM293 234h1v1h-1zM293 277h1v1h-1zM293 320h1v1h-1zM293 363h1v1h-1zM293 390h1v1h-1zM294 254h1v1h-1zM294 279h1v1h-1zM294 318h1v1h-1zM294 343h1v1h-1zM295 282h1v1h-1zM295 285h1v1h-1zM295 312h1v1h-1zM295 315h1v1h-1zM296 181h1v1h-1zM296 270h1v1h-1zM296 287h1v1h-1zM296 290h1v1h-1zM296 307h1v1h-1zM296 310h1v1h-1zM296 327h1v1h-1zM296 416h1v1h-1zM297 293h1v1h-1zM297 296h1v1h-1zM297 299h1v1h-1zM297 301h1v1h-1zM297 304h1v1h-1zM299 202h1v1h-1zM299 230h1v1h-1zM299 367h1v1h-1zM299 395h1v1h-1zM300 251h1v1h-1zM300 346h1v1h-1zM301 184h1v1h-1zM301 284h1v1h-1zM301 313h1v1h-1zM301 413h1v1h-1zM302 268h1v1h-1zM302 299h1v1h-1zM302 329h1v1h-1zM304 196h1v1h-1zM304 401h1v1h-1zM305 226h1v1h-1zM305 248h1v1h-1zM305 349h1v1h-1zM305 371h1v1h-1zM306 187h1v1h-1zM306 410h1v1h-1zM307 283h1v1h-1zM307 314h1v1h-1zM308 266h1v1h-1zM308 299h1v1h-1zM308 331h1v1h-1zM310 190h1v1h-1zM310 407h1v1h-1zM311 222h1v1h-1zM311 375h1v1h-1zM312 245h1v1h-1zM312 352h1v1h-1zM313 282h1v1h-1zM313 315h1v1h-1zM314 264h1v1h-1zM314 333h1v1h-1zM315 193h1v1h-1zM315 299h1v1h-1zM315 404h1v1h-1zM317 217h1v1h-1zM317 380h1v1h-1zM318 242h1v1h-1zM318 355h1v1h-1zM319 197h1v1h-1zM319 400h1v1h-1zM320 281h1v1h-1zM320 316h1v1h-1zM321 262h1v1h-1zM321 299h1v1h-1zM321 335h1v1h-1zM323 200h1v1h-1zM323 397h1v1h-1zM324 213h1v1h-1zM324 384h1v1h-1zM325 239h1v1h-1zM325 358h1v1h-1zM327 204h1v1h-1zM327 280h1v1h-1zM327 317h1v1h-1zM327 393h1v1h-1zM328 260h1v1h-1zM328 337h1v1h-1zM329 299h1v1h-1zM331 208h1v1h-1zM331 389h1v1h-1zM332 235h1v1h-1zM332 362h1v1h-1zM334 279h1v1h-1zM334 318h1v1h-1zM335 211h1v1h-1zM335 386h1v1h-1zM336 258h1v1h-1zM336 299h1v1h-1zM336 339h1v1h-1zM339 215h1v1h-1zM339 382h1v1h-1zM340 232h1v1h-1zM340 365h1v1h-1zM342 219h1v1h-1zM342 278h1v1h-1zM342 319h1v1h-1zM342 378h1v1h-1zM343 255h1v1h-1zM343 342h1v1h-1zM344 299h1v1h-1zM345 224h1v1h-1zM345 373h1v1h-1zM348 228h1v1h-1zM348 369h1v1h-1zM350 277h1v1h-1zM350 320h1v1h-1zM351 232h1v1h-1zM351 365h1v1h-1zM352 253h1v1h-1zM352 344h1v1h-1zM353 299h1v1h-1zM354 236h1v1h-1zM354 361h1v1h-1zM356 241h1v1h-1zM356 356h1v1h-1zM359 245h1v1h-1zM359 275h1v1h-1zM359 322h1v1h-1zM359 352h1v1h-1zM361 250h1v1h-1zM361 347h1v1h-1zM362 299h1v1h-1zM363 255h1v1h-1zM363 342h1v1h-1zM364 259h1v1h-1zM364 338h1v1h-1zM366 264h1v1h-1zM366 333h1v1h-1zM367 269h1v1h-1zM367 328h1v1h-1zM368 274h1v1h-1zM368 323h1v1h-1zM369 279h1v1h-1zM369 318h1v1h-1zM370 284h1v1h-1zM370 313h1v1h-1zM371 289h1v1h-1zM371 294h1v1h-1zM371 299h1v1h-1zM371 303h1v1h-1zM371 308h1v1h-1z" fill="#000"/>
<path d="M59 290h1v1h-1zM59 294h1v1h-1zM59 299h1v1h-1zM59 303h1v1h-1zM59 307h1v1h-1zM60 282h1v1h-1zM60 286h1v1h-1zM60 311h1v1h-1zM60 315h1v1h-1zM61 278h1v1h-1zM61 319h1v1h-1zM62 274h1v1h-1zM62 323h1v1h-1zM63 270h1v1h-1zM63 327h1v1h-1zM64 266h1v1h-1zM64 331h1v1h-1zM66 262h1v1h-1zM66 335h1v1h-1zM67 258h1v1h-1zM67 339h1v1h-1zM69 254h1v1h-1zM69 343h1v1h-1zM71 250h1v1h-1zM71 347h1v1h-1zM73 246h1v1h-1zM73 351h1v1h-1zM76 243h1v1h-1zM76 354h1v1h-1zM78 239h1v1h-1zM78 358h1v1h-1zM81 235h1v1h-1zM81 362h1v1h-1zM83 232h1v1h-1zM83 365h1v1h-1zM86 229h1v1h-1zM86 368h1v1h-1zM89 225h1v1h-1zM89 372h1v1h-1zM92 222h1v1h-1zM92 375h1v1h-1zM96 219h1v1h-1zM96 378h1v1h-1zM99 216h1v1h-1zM99 381h1v1h-1zM102 213h1v1h-1zM102 384h1v1h-1zM106 210h1v1h-1zM106 387h1v1h-1zM110 207h1v1h-1zM110 390h1v1h-1zM114 205h1v1h-1zM114 392h1v1h-1zM118 202h1v1h-1zM118 395h1v1h-1zM122 200h1v1h-1zM122 397h1v1h-1zM126 198h1v1h-1zM126 399h1v1h-1zM130 195h1v1h-1zM130 402h1v1h-1zM135 193h1v1h-1zM135 404h1v1h-1zM139 191h1v1h-1zM139 406h1v1h-1zM143 190h1v1h-1zM143 407h1v1h-1zM148 188h1v1h-1zM148 409h1v1h-1zM153 187h1v1h-1zM153 410h1v1h-1zM157 185h1v1h-1zM157 412h1v1h-1zM162 184h1v1h-1zM162 413h1v1h-1zM167 183h1v1h-1zM167 414h1v1h-1zM172 182h1v1h-1zM172 415h1v1h-1zM177 181h1v1h-1zM177 416h1v1h-1zM182 181h1v1h-1zM182 416h1v1h-1zM187 180h1v1h-1zM187 417h1v1h-1zM192 180h1v1h-1zM192 417h1v1h-1zM197 180h1v1h-1zM197 417h1v1h-1zM202 179h1v1h-1zM202 418h1v1h-1zM206 180h1v1h-1zM206 417h1v1h-1zM211 180h1v1h-1zM211 417h1v1h-1zM216 180h1v1h-1zM216 417h1v1h-1zM221 181h1v1h-1zM221 416h1v1h-1zM226 181h1v1h-1zM226 416h1v1h-1zM231 182h1v1h-1zM231 415h1v1h-1zM236 183h1v1h-1zM236 414h1v1h-1zM241 184h1v1h-1zM241 413h1v1h-1zM246 185h1v1h-1zM246 412h1v1h-1zM250 187h1v1h-1zM250 410h1v1h-1zM255 188h1v1h-1zM255 409h1v1h-1zM260 190h1v1h-1zM260 407h1v1h-1zM264 191h1v1h-1zM264 406h1v1h-1zM268 193h1v1h-1zM268 404h1v1h-1zM273 195h1v1h-1zM273 402h1v1h-1zM277 198h1v1h-1zM277 399h1v1h-1zM281 200h1v1h-1zM281 397h1v1h-1zM285 202h1v1h-1zM285 395h1v1h-1zM289 205h1v1h-1zM289 392h1v1h-1zM293 207h1v1h-1zM293 390h1v1h-1zM297 210h1v1h-1zM297 387h1v1h-1zM301 213h1v1h-1zM301 384h1v1h-1zM304 216h1v1h-1zM304 381h1v1h-1zM307 219h1v1h-1zM307 378h1v1h-1zM311 222h1v1h-1zM311 375h1v1h-1zM314 225h1v1h-1zM314 372h1v1h-1zM317 229h1v1h-1zM317 368h1v1h-1zM320 232h1v1h-1zM320 365h1v1h-1zM322 235h1v1h-1zM322 362h1v1h-1zM325 239h1v1h-1zM325 358h1v1h-1zM327 243h1v1h-1zM327 354h1v1h-1zM330 246h1v1h-1zM330 351h1v1h-1zM332 250h1v1h-1zM332 347h1v1h-1zM334 254h1v1h-1zM334 343h1v1h-1zM336 258h1v1h-1zM336 339h1v1h-1zM337 262h1v1h-1zM337 335h1v1h-1zM339 266h1v1h-1zM339 331h1v1h-1zM340 270h1v1h-1zM340 327h1v1h-1zM341 274h1v1h-1zM341 323h1v1h-1zM342 278h1v1h-1zM342 319h1v1h-1zM343 282h1v1h-1zM343 286h1v1h-1zM343 311h1v1h-1zM343 315h1v1h-1zM344 290h1v1h-1zM344 294h1v1h-1zM344 299h1v1h-1zM344 303h1v1h-1zM344 307h1v1h-1z" fill="#b05a5a"/>
<ellipse cx="202.0" cy="299.0" rx="30.1" ry="25.2" fill="none" stroke="#8c8c8c" stroke-width="1.15"/>
<ellipse cx="202.0" cy="299.0" rx="16.9" ry="14.2" fill="none" stroke="#8c8c8c" stroke-width="1.15"/>
<ellipse cx="202.0" cy="299.0" rx="9.5" ry="8.0" fill="none" stroke="#8c8c8c" stroke-width="1.15"/>
<path d="M412 289h1v1h-1zM412 294h1v1h-1zM412 299h1v1h-1zM413 284h1v1h-1zM414 279h1v1h-1zM415 274h1v1h-1zM416 269h1v1h-1zM417 264h1v1h-1zM419 259h1v1h-1zM420 255h1v1h-1zM421 299h1v1h-1zM422 250h1v1h-1zM424 245h1v1h-1zM424 275h1v1h-1zM427 241h1v1h-1zM429 236h1v1h-1zM430 299h1v1h-1zM431 253h1v1h-1zM432 232h1v1h-1zM433 277h1v1h-1zM435 228h1v1h-1zM438 224h1v1h-1zM439 299h1v1h-1zM440 255h1v1h-1zM441 219h1v1h-1zM441 278h1v1h-1zM443 232h1v1h-1zM444 215h1v1h-1zM447 258h1v1h-1zM447 299h1v1h-1zM448 211h1v1h-1zM449 279h1v1h-1zM451 235h1v1h-1zM452 208h1v1h-1zM454 299h1v1h-1zM455 260h1v1h-1zM456 204h1v1h-1zM456 280h1v1h-1zM458 239h1v1h-1zM459 213h1v1h-1zM460 200h1v1h-1zM462 262h1v1h-1zM462 299h1v1h-1zM463 281h1v1h-1zM464 197h1v1h-1zM465 242h1v1h-1zM466 217h1v1h-1zM468 193h1v1h-1zM468 299h1v1h-1zM469 264h1v1h-1zM470 282h1v1h-1zM471 245h1v1h-1zM472 222h1v1h-1zM473 190h1v1h-1zM475 266h1v1h-1zM475 299h1v1h-1zM476 283h1v1h-1zM477 187h1v1h-1zM478 226h1v1h-1zM478 248h1v1h-1zM479 196h1v1h-1zM481 268h1v1h-1zM481 299h1v1h-1zM482 184h1v1h-1zM482 284h1v1h-1zM483 251h1v1h-1zM484 202h1v1h-1zM484 230h1v1h-1zM486 293h1v1h-1zM486 296h1v1h-1zM486 299h1v1h-1zM487 181h1v1h-1zM487 270h1v1h-1zM487 287h1v1h-1zM487 290h1v1h-1zM488 282h1v1h-1zM488 285h1v1h-1zM489 254h1v1h-1zM489 279h1v1h-1zM490 207h1v1h-1zM490 234h1v1h-1zM490 277h1v1h-1zM491 274h1v1h-1zM492 179h1v1h-1zM492 271h1v1h-1zM492 299h1v1h-1zM493 269h1v1h-1zM493 285h1v1h-1zM494 256h1v1h-1zM494 266h1v1h-1zM495 212h1v1h-1zM495 238h1v1h-1zM496 264h1v1h-1zM497 176h1v1h-1zM497 261h1v1h-1zM497 273h1v1h-1zM497 299h1v1h-1zM498 286h1v1h-1zM499 259h1v1h-1zM500 217h1v1h-1zM500 241h1v1h-1zM501 183h1v1h-1zM501 256h1v1h-1zM501 299h1v1h-1zM502 174h1v1h-1zM502 254h1v1h-1zM502 274h1v1h-1zM503 287h1v1h-1zM504 222h1v1h-1zM504 244h1v1h-1zM504 252h1v1h-1zM504 261h1v1h-1zM506 189h1v1h-1zM506 250h1v1h-1zM506 276h1v1h-1zM506 299h1v1h-1zM507 171h1v1h-1zM507 288h1v1h-1zM508 247h1v1h-1zM508 263h1v1h-1zM509 226h1v1h-1zM510 195h1v1h-1zM510 277h1v1h-1zM510 299h1v1h-1zM511 245h1v1h-1zM511 288h1v1h-1zM512 265h1v1h-1zM513 169h1v1h-1zM513 230h1v1h-1zM513 243h1v1h-1zM513 250h1v1h-1zM514 201h1v1h-1zM514 278h1v1h-1zM514 299h1v1h-1zM515 241h1v1h-1zM515 289h1v1h-1zM516 253h1v1h-1zM516 267h1v1h-1zM517 234h1v1h-1zM518 167h1v1h-1zM518 207h1v1h-1zM518 239h1v1h-1zM518 279h1v1h-1zM518 299h1v1h-1zM519 289h1v1h-1zM520 238h1v1h-1zM520 255h1v1h-1zM520 269h1v1h-1zM521 299h1v1h-1zM522 212h1v1h-1zM522 280h1v1h-1zM522 290h1v1h-1zM523 236h1v1h-1zM523 270h1v1h-1zM524 166h1v1h-1zM524 241h1v1h-1zM524 258h1v1h-1zM525 217h1v1h-1zM525 234h1v1h-1zM525 281h1v1h-1zM525 299h1v1h-1zM526 272h1v1h-1zM526 290h1v1h-1zM527 173h1v1h-1zM527 244h1v1h-1zM527 260h1v1h-1zM528 221h1v1h-1zM528 233h1v1h-1zM528 282h1v1h-1zM528 292h1v1h-1zM528 294h1v1h-1zM528 295h1v1h-1zM528 297h1v1h-1zM528 299h1v1h-1zM529 164h1v1h-1zM529 273h1v1h-1zM529 288h1v1h-1zM529 289h1v1h-1zM529 291h1v1h-1zM530 180h1v1h-1zM530 247h1v1h-1zM530 262h1v1h-1zM530 286h1v1h-1zM531 226h1v1h-1zM531 231h1v1h-1zM531 283h1v1h-1zM531 285h1v1h-1zM531 299h1v1h-1zM532 275h1v1h-1zM532 282h1v1h-1zM532 291h1v1h-1zM533 187h1v1h-1zM533 250h1v1h-1zM533 264h1v1h-1zM533 279h1v1h-1zM533 280h1v1h-1zM534 230h1v1h-1zM534 277h1v1h-1zM534 284h1v1h-1zM534 292h1v1h-1zM534 299h1v1h-1zM535 162h1v1h-1zM535 193h1v1h-1zM535 266h1v1h-1zM535 276h1v1h-1zM536 253h1v1h-1zM536 275h1v1h-1zM536 299h1v1h-1zM537 228h1v1h-1zM537 233h1v1h-1zM537 273h1v1h-1zM537 285h1v1h-1zM537 292h1v1h-1zM538 199h1v1h-1zM538 255h1v1h-1zM538 268h1v1h-1zM538 272h1v1h-1zM538 277h1v1h-1zM539 237h1v1h-1zM539 271h1v1h-1zM539 286h1v1h-1zM539 299h1v1h-1zM540 161h1v1h-1zM540 204h1v1h-1zM540 227h1v1h-1zM540 270h1v1h-1zM540 279h1v1h-1zM540 292h1v1h-1zM541 241h1v1h-1zM541 258h1v1h-1zM541 286h1v1h-1zM541 299h1v1h-1zM542 269h1v1h-1zM542 280h1v1h-1zM542 293h1v1h-1zM543 210h1v1h-1zM543 226h1v1h-1zM543 260h1v1h-1zM543 267h1v1h-1zM543 271h1v1h-1zM544 244h1v1h-1zM544 266h1v1h-1zM544 287h1v1h-1zM544 293h1v1h-1zM544 299h1v1h-1zM545 215h1v1h-1zM545 262h1v1h-1zM545 273h1v1h-1zM545 281h1v1h-1zM546 160h1v1h-1zM546 225h1v1h-1zM546 247h1v1h-1zM546 265h1v1h-1zM546 288h1v1h-1zM546 293h1v1h-1zM546 299h1v1h-1zM547 219h1v1h-1zM547 264h1v1h-1zM547 274h1v1h-1zM547 282h1v1h-1zM548 250h1v1h-1zM548 288h1v1h-1zM548 294h1v1h-1zM548 299h1v1h-1zM549 224h1v1h-1zM549 263h1v1h-1zM549 266h1v1h-1zM549 276h1v1h-1zM549 283h1v1h-1zM550 252h1v1h-1zM550 262h1v1h-1zM550 284h1v1h-1zM550 289h1v1h-1zM550 294h1v1h-1zM550 299h1v1h-1zM551 228h1v1h-1zM551 255h1v1h-1zM551 268h1v1h-1zM551 277h1v1h-1zM551 289h1v1h-1zM551 299h1v1h-1zM552 159h1v1h-1zM552 223h1v1h-1zM552 232h1v1h-1zM552 261h1v1h-1zM552 278h1v1h-1zM552 284h1v1h-1zM552 294h1v1h-1zM553 257h1v1h-1zM553 261h1v1h-1zM553 270h1v1h-1zM553 290h1v1h-1zM554 167h1v1h-1zM554 236h1v1h-1zM554 271h1v1h-1zM554 279h1v1h-1zM554 285h1v1h-1zM555 174h1v1h-1zM555 222h1v1h-1zM555 260h1v1h-1zM555 286h1v1h-1zM556 239h1v1h-1zM556 259h1v1h-1zM556 262h1v1h-1zM556 273h1v1h-1zM556 280h1v1h-1zM557 181h1v1h-1zM557 242h1v1h-1zM557 274h1v1h-1zM557 281h1v1h-1zM558 158h1v1h-1zM558 188h1v1h-1zM558 221h1v1h-1zM558 246h1v1h-1zM558 258h1v1h-1zM558 264h1v1h-1zM558 276h1v1h-1zM558 282h1v1h-1zM559 194h1v1h-1zM559 266h1v1h-1zM560 249h1v1h-1zM560 258h1v1h-1zM560 268h1v1h-1zM560 277h1v1h-1zM561 200h1v1h-1zM561 251h1v1h-1zM561 257h1v1h-1zM561 269h1v1h-1zM561 278h1v1h-1zM562 205h1v1h-1zM562 221h1v1h-1zM562 254h1v1h-1zM562 279h1v1h-1zM563 211h1v1h-1zM563 256h1v1h-1zM563 271h1v1h-1zM564 158h1v1h-1zM564 215h1v1h-1zM564 259h1v1h-1zM564 273h1v1h-1zM565 220h1v1h-1zM565 256h1v1h-1zM565 261h1v1h-1zM565 274h1v1h-1zM566 225h1v1h-1zM566 263h1v1h-1zM566 275h1v1h-1zM566 277h1v1h-1zM567 229h1v1h-1zM567 255h1v1h-1zM567 265h1v1h-1zM568 220h1v1h-1zM568 233h1v1h-1zM568 236h1v1h-1zM568 267h1v1h-1zM569 240h1v1h-1zM569 255h1v1h-1zM569 269h1v1h-1zM569 270h1v1h-1zM570 157h1v1h-1zM570 243h1v1h-1zM570 246h1v1h-1zM570 255h1v1h-1zM570 272h1v1h-1zM571 249h1v1h-1zM571 273h1v1h-1zM571 275h1v1h-1zM572 219h1v1h-1zM572 252h1v1h-1zM572 254h1v1h-1zM573 257h1v1h-1zM573 259h1v1h-1zM574 254h1v1h-1zM574 261h1v1h-1zM574 263h1v1h-1zM575 219h1v1h-1zM575 265h1v1h-1zM575 267h1v1h-1zM575 269h1v1h-1zM576 157h1v1h-1zM576 254h1v1h-1zM576 271h1v1h-1zM576 272h1v1h-1zM576 274h1v1h-1zM578 219h1v1h-1zM578 254h1v1h-1zM580 254h1v1h-1zM582 157h1v1h-1zM582 165h1v1h-1zM582 172h1v1h-1zM582 179h1v1h-1zM582 186h1v1h-1zM582 192h1v1h-1zM582 198h1v1h-1zM582 204h1v1h-1zM582 209h1v1h-1zM582 214h1v1h-1zM582 219h1v1h-1zM582 223h1v1h-1zM582 228h1v1h-1zM582 232h1v1h-1zM582 235h1v1h-1zM582 239h1v1h-1zM582 242h1v1h-1zM582 245h1v1h-1zM582 248h1v1h-1zM582 251h1v1h-1zM582 254h1v1h-1zM582 256h1v1h-1zM582 259h1v1h-1zM582 261h1v1h-1zM582 263h1v1h-1zM582 265h1v1h-1zM582 267h1v1h-1zM582 269h1v1h-1zM582 270h1v1h-1zM582 272h1v1h-1zM582 273h1v1h-1zM583 254h1v1h-1zM585 219h1v1h-1zM585 254h1v1h-1zM587 157h1v1h-1zM587 254h1v1h-1zM587 271h1v1h-1zM587 272h1v1h-1zM587 274h1v1h-1zM588 219h1v1h-1zM588 265h1v1h-1zM588 267h1v1h-1zM588 269h1v1h-1zM589 254h1v1h-1zM589 261h1v1h-1zM589 263h1v1h-1zM590 257h1v1h-1zM590 259h1v1h-1zM591 219h1v1h-1zM591 252h1v1h-1zM591 254h1v1h-1zM592 249h1v1h-1zM592 273h1v1h-1zM592 275h1v1h-1zM593 157h1v1h-1zM593 243h1v1h-1zM593 246h1v1h-1zM593 255h1v1h-1zM593 272h1v1h-1zM594 240h1v1h-1zM594 255h1v1h-1zM594 269h1v1h-1zM594 270h1v1h-1zM595 220h1v1h-1zM595 233h1v1h-1zM595 236h1v1h-1zM595 267h1v1h-1zM596 229h1v1h-1zM596 255h1v1h-1zM596 265h1v1h-1zM597 225h1v1h-1zM597 263h1v1h-1zM597 275h1v1h-1zM597 277h1v1h-1zM598 220h1v1h-1zM598 256h1v1h-1zM598 261h1v1h-1zM598 274h1v1h-1zM599 158h1v1h-1zM599 215h1v1h-1zM599 259h1v1h-1zM599 273h1v1h-1zM600 211h1v1h-1zM600 256h1v1h-1zM600 271h1v1h-1zM601 205h1v1h-1zM601 221h1v1h-1zM601 254h1v1h-1zM601 279h1v1h-1zM602 200h1v1h-1zM602 251h1v1h-1zM602 257h1v1h-1zM602 269h1v1h-1zM602 278h1v1h-1zM603 249h1v1h-1zM603 258h1v1h-1zM603 268h1v1h-1zM603 277h1v1h-1zM604 194h1v1h-1zM604 266h1v1h-1zM605 158h1v1h-1zM605 188h1v1h-1zM605 221h1v1h-1zM605 246h1v1h-1zM605 258h1v1h-1zM605 264h1v1h-1zM605 276h1v1h-1zM605 282h1v1h-1zM606 181h1v1h-1zM606 242h1v1h-1zM606 274h1v1h-1zM606 281h1v1h-1zM607 239h1v1h-1zM607 259h1v1h-1zM607 262h1v1h-1zM607 273h1v1h-1zM607 280h1v1h-1zM608 174h1v1h-1zM608 222h1v1h-1zM608 260h1v1h-1zM608 286h1v1h-1zM609 167h1v1h-1zM609 236h1v1h-1zM609 271h1v1h-1zM609 279h1v1h-1zM609 285h1v1h-1zM610 257h1v1h-1zM610 261h1v1h-1zM610 270h1v1h-1zM610 290h1v1h-1zM611 159h1v1h-1zM611 223h1v1h-1zM611 232h1v1h-1zM611 261h1v1h-1zM611 278h1v1h-1zM611 284h1v1h-1zM611 294h1v1h-1zM612 228h1v1h-1zM612 255h1v1h-1zM612 268h1v1h-1zM612 277h1v1h-1zM612 289h1v1h-1zM612 299h1v1h-1zM613 252h1v1h-1zM613 262h1v1h-1zM613 284h1v1h-1zM613 289h1v1h-1zM613 294h1v1h-1zM613 299h1v1h-1zM614 224h1v1h-1zM614 263h1v1h-1zM614 266h1v1h-1zM614 276h1v1h-1zM614 283h1v1h-1zM615 250h1v1h-1zM615 288h1v1h-1zM615 294h1v1h-1zM615 299h1v1h-1zM616 219h1v1h-1zM616 264h1v1h-1zM616 274h1v1h-1zM616 282h1v1h-1zM617 160h1v1h-1zM617 225h1v1h-1zM617 247h1v1h-1zM617 265h1v1h-1zM617 288h1v1h-1zM617 293h1v1h-1zM617 299h1v1h-1zM618 215h1v1h-1zM618 262h1v1h-1zM618 273h1v1h-1zM618 281h1v1h-1zM619 244h1v1h-1zM619 266h1v1h-1zM619 287h1v1h-1zM619 293h1v1h-1zM619 299h1v1h-1zM620 210h1v1h-1zM620 226h1v1h-1zM620 260h1v1h-1zM620 267h1v1h-1zM620 271h1v1h-1zM621 269h1v1h-1zM621 280h1v1h-1zM621 293h1v1h-1zM622 241h1v1h-1zM622 258h1v1h-1zM622 286h1v1h-1zM622 299h1v1h-1zM623 161h1v1h-1zM623 204h1v1h-1zM623 227h1v1h-1zM623 270h1v1h-1zM623 279h1v1h-1zM623 292h1v1h-1zM624 237h1v1h-1zM624 271h1v1h-1zM624 286h1v1h-1zM624 299h1v1h-1zM625 199h1v1h-1zM625 255h1v1h-1zM625 268h1v1h-1zM625 272h1v1h-1zM625 277h1v1h-1zM626 228h1v1h-1zM626 233h1v1h-1zM626 273h1v1h-1zM626 285h1v1h-1zM626 292h1v1h-1zM627 253h1v1h-1zM627 275h1v1h-1zM627 299h1v1h-1zM628 162h1v1h-1zM628 193h1v1h-1zM628 266h1v1h-1zM628 276h1v1h-1zM629 230h1v1h-1zM629 277h1v1h-1zM629 284h1v1h-1zM629 292h1v1h-1zM629 299h1v1h-1zM630 187h1v1h-1zM630 250h1v1h-1zM630 264h1v1h-1zM630 279h1v1h-1zM630 280h1v1h-1zM631 275h1v1h-1zM631 282h1v1h-1zM631 291h1v1h-1zM632 226h1v1h-1zM632 231h1v1h-1zM632 283h1v1h-1zM632 285h1v1h-1zM632 299h1v1h-1zM633 180h1v1h-1zM633 247h1v1h-1zM633 262h1v1h-1zM633 286h1v1h-1zM634 164h1v1h-1zM634 273h1v1h-1zM634 288h1v1h-1zM634 289h1v1h-1zM634 291h1v1h-1zM635 221h1v1h-1zM635 233h1v1h-1zM635 282h1v1h-1zM635 292h1v1h-1zM635 294h1v1h-1zM635 295h1v1h-1zM635 297h1v1h-1zM635 299h1v1h-1zM636 173h1v1h-1zM636 244h1v1h-1zM636 260h1v1h-1zM637 272h1v1h-1zM637 290h1v1h-1zM638 217h1v1h-1zM638 234h1v1h-1zM638 281h1v1h-1zM638 299h1v1h-1zM639 166h1v1h-1zM639 241h1v1h-1zM639 258h1v1h-1zM640 236h1v1h-1zM640 270h1v1h-1zM641 212h1v1h-1zM641 280h1v1h-1zM641 290h1v1h-1zM642 299h1v1h-1zM643 238h1v1h-1zM643 255h1v1h-1zM643 269h1v1h-1zM644 289h1v1h-1zM645 167h1v1h-1zM645 207h1v1h-1zM645 239h1v1h-1zM645 279h1v1h-1zM645 299h1v1h-1zM646 234h1v1h-1zM647 253h1v1h-1zM647 267h1v1h-1zM648 241h1v1h-1zM648 289h1v1h-1zM649 201h1v1h-1zM649 278h1v1h-1zM649 299h1v1h-1zM650 169h1v1h-1zM650 230h1v1h-1zM650 243h1v1h-1zM650 250h1v1h-1zM651 265h1v1h-1zM652 245h1v1h-1zM652 288h1v1h-1zM653 195h1v1h-1zM653 277h1v1h-1zM653 299h1v1h-1zM654 226h1v1h-1zM655 247h1v1h-1zM655 263h1v1h-1zM656 171h1v1h-1zM656 288h1v1h-1zM657 189h1v1h-1zM657 250h1v1h-1zM657 276h1v1h-1zM657 299h1v1h-1zM659 222h1v1h-1zM659 244h1v1h-1zM659 252h1v1h-1zM659 261h1v1h-1zM660 287h1v1h-1zM661 174h1v1h-1zM661 254h1v1h-1zM661 274h1v1h-1zM662 183h1v1h-1zM662 256h1v1h-1zM662 299h1v1h-1zM663 217h1v1h-1zM663 241h1v1h-1zM664 259h1v1h-1zM665 286h1v1h-1zM666 176h1v1h-1zM666 261h1v1h-1zM666 273h1v1h-1zM666 299h1v1h-1zM667 264h1v1h-1zM668 212h1v1h-1zM668 238h1v1h-1zM669 256h1v1h-1zM669 266h1v1h-1zM670 269h1v1h-1zM670 285h1v1h-1zM671 179h1v1h-1zM671 271h1v1h-1zM671 299h1v1h-1zM672 274h1v1h-1zM673 207h1v1h-1zM673 234h1v1h-1zM673 277h1v1h-1zM674 254h1v1h-1zM674 279h1v1h-1zM675 282h1v1h-1zM675 285h1v1h-1zM676 181h1v1h-1zM676 270h1v1h-1zM676 287h1v1h-1zM676 290h1v1h-1zM677 293h1v1h-1zM677 296h1v1h-1zM677 299h1v1h-1zM679 202h1v1h-1zM679 230h1v1h-1zM680 251h1v1h-1zM681 184h1v1h-1zM681 284h1v1h-1zM682 268h1v1h-1zM682 299h1v1h-1zM684 196h1v1h-1zM685 226h1v1h-1zM685 248h1v1h-1zM686 187h1v1h-1zM687 283h1v1h-1zM688 266h1v1h-1zM688 299h1v1h-1zM690 190h1v1h-1zM691 222h1v1h-1zM692 245h1v1h-1zM693 282h1v1h-1zM694 264h1v1h-1zM695 193h1v1h-1zM695 299h1v1h-1zM697 217h1v1h-1zM698 242h1v1h-1zM699 197h1v1h-1zM700 281h1v1h-1zM701 262h1v1h-1zM701 299h1v1h-1zM703 200h1v1h-1zM704 213h1v1h-1zM705 239h1v1h-1zM707 204h1v1h-1zM707 280h1v1h-1zM708 260h1v1h-1zM709 299h1v1h-1zM711 208h1v1h-1zM712 235h1v1h-1zM714 279h1v1h-1zM715 211h1v1h-1zM716 258h1v1h-1zM716 299h1v1h-1zM719 215h1v1h-1zM720 232h1v1h-1zM722 219h1v1h-1zM722 278h1v1h-1zM723 255h1v1h-1zM724 299h1v1h-1zM725 224h1v1h-1zM728 228h1v1h-1zM730 277h1v1h-1zM731 232h1v1h-1zM732 253h1v1h-1zM733 299h1v1h-1zM734 236h1v1h-1zM736 241h1v1h-1zM739 245h1v1h-1zM739 275h1v1h-1zM741 250h1v1h-1zM742 299h1v1h-1zM743 255h1v1h-1zM744 259h1v1h-1zM746 264h1v1h-1zM747 269h1v1h-1zM748 274h1v1h-1zM749 279h1v1h-1zM750 284h1v1h-1zM751 289h1v1h-1zM751 294h1v1h-1zM751 299h1v1h-1z" fill="#000"/>
<path d="M439 290h1v1h-1zM439 294h1v1h-1zM439 299h1v1h-1zM440 282h1v1h-1zM440 286h1v1h-1zM441 278h1v1h-1zM442 274h1v1h-1zM443 270h1v1h-1zM444 266h1v1h-1zM446 262h1v1h-1zM447 258h1v1h-1zM449 254h1v1h-1zM451 250h1v1h-1zM453 246h1v1h-1zM456 243h1v1h-1zM458 239h1v1h-1zM461 235h1v1h-1zM463 232h1v1h-1zM466 229h1v1h-1zM469 225h1v1h-1zM472 222h1v1h-1zM476 219h1v1h-1zM479 216h1v1h-1zM482 213h1v1h-1zM486 210h1v1h-1zM490 207h1v1h-1zM494 205h1v1h-1zM498 202h1v1h-1zM502 200h1v1h-1zM506 198h1v1h-1zM510 195h1v1h-1zM515 193h1v1h-1zM519 191h1v1h-1zM523 190h1v1h-1zM528 188h1v1h-1zM533 187h1v1h-1zM537 185h1v1h-1zM542 184h1v1h-1zM547 183h1v1h-1zM552 182h1v1h-1zM557 181h1v1h-1zM562 181h1v1h-1zM567 180h1v1h-1zM572 180h1v1h-1zM577 180h1v1h-1zM582 179h1v1h-1zM586 180h1v1h-1zM591 180h1v1h-1zM596 180h1v1h-1zM601 181h1v1h-1zM606 181h1v1h-1zM611 182h1v1h-1zM616 183h1v1h-1zM621 184h1v1h-1zM626 185h1v1h-1zM630 187h1v1h-1zM635 188h1v1h-1zM640 190h1v1h-1zM644 191h1v1h-1zM648 193h1v1h-1zM653 195h1v1h-1zM657 198h1v1h-1zM661 200h1v1h-1zM665 202h1v1h-1zM669 205h1v1h-1zM673 207h1v1h-1zM677 210h1v1h-1zM681 213h1v1h-1zM684 216h1v1h-1zM687 219h1v1h-1zM691 222h1v1h-1zM694 225h1v1h-1zM697 229h1v1h-1zM700 232h1v1h-1zM702 235h1v1h-1zM705 239h1v1h-1zM707 243h1v1h-1zM710 246h1v1h-1zM712 250h1v1h-1zM714 254h1v1h-1zM716 258h1v1h-1zM717 262h1v1h-1zM719 266h1v1h-1zM720 270h1v1h-1zM721 274h1v1h-1zM722 278h1v1h-1zM723 282h1v1h-1zM723 286h1v1h-1zM724 290h1v1h-1zM724 294h1v1h-1zM724 299h1v1h-1z" fill="#b05a5a"/>
<path d="M551.9,299.0 A30.1,25.2 0 0 1 612.1,299.0" fill="none" stroke="#000" stroke-width="1.5"/>
<path d="M565.0,299.0 A16.9,14.2 0 0 1 599.0,299.0" fill="none" stroke="#000" stroke-width="1.5"/>
<path d="M572.5,299.0 A9.5,8.0 0 0 1 591.5,299.0" fill="none" stroke="#000" stroke-width="1.5"/>
<line x1="424" y1="275.8" x2="582" y2="299" stroke="#808080" stroke-width="1.3"/>
<path d="M345.3,299.4 C345.5,302.9 343.8,306.8 341.4,309.5 C339.0,312.2 335.6,314.0 331.2,315.9 C326.8,317.8 320.2,319.7 314.7,321.0 C309.2,322.3 303.1,322.8 298.2,323.5 C293.2,324.2 288.4,324.5 285.0,325.0 C281.6,325.5 280.2,326.1 277.8,326.6 C280.7,329.6 283.6,332.4 286.6,335.7 C289.6,339.0 293.2,342.6 295.8,346.4 C298.4,350.2 300.5,354.5 301.9,358.6 C303.3,362.7 304.2,367.2 304.2,370.8 C304.2,374.4 303.8,377.3 301.9,380.0 C300.0,382.7 296.3,385.3 292.7,386.8 C289.1,388.3 284.8,389.1 280.5,389.1 C276.2,389.1 271.4,388.1 266.8,386.8 C262.2,385.5 257.9,384.7 253.0,381.5 C248.2,378.3 242.9,372.5 237.7,367.7 C232.5,362.9 227.0,357.6 221.7,352.5 C220.7,354.3 219.6,354.7 218.7,358.0 C217.8,361.3 217.8,368.1 216.4,372.3 C215.0,376.5 212.9,380.1 210.3,383.0 C207.8,385.9 204.0,388.7 201.1,389.5 C198.2,390.3 195.2,389.3 193.0,388.0 C190.8,386.7 189.6,384.6 187.7,381.5 C185.8,378.4 183.2,373.8 181.6,369.3 C179.9,364.9 179.1,359.6 177.8,354.8 C170.9,360.1 163.0,366.5 157.2,370.8 C151.4,375.1 147.6,378.3 143.0,380.5 C138.4,382.7 134.2,383.1 129.7,383.8 C125.2,384.5 120.1,385.1 116.0,384.5 C111.9,383.9 108.0,382.3 105.3,380.0 C102.6,377.7 100.7,374.4 99.9,370.8 C99.1,367.2 99.7,363.4 100.7,358.6 C101.7,353.8 105.4,345.4 106.0,341.8 C106.6,338.2 105.2,338.4 104.5,337.2 C103.8,336.0 105.4,335.7 101.7,334.9 C98.0,334.1 88.6,333.9 82.1,332.5 C75.6,331.1 68.5,329.1 62.5,326.8 C56.5,324.5 50.6,321.6 46.2,318.6 C41.9,315.6 38.6,312.1 36.4,308.8 C34.2,305.5 32.7,302.8 32.8,299.0 C32.9,295.2 34.7,289.5 37.2,286.0 C39.7,282.5 43.6,280.4 47.8,277.8 C52.0,275.2 57.6,272.4 62.5,270.5 C67.4,268.6 71.5,267.5 77.2,266.4 C82.9,265.3 92.1,265.0 96.8,264.0 C101.5,263.0 102.7,261.5 105.6,260.3 C105.7,257.5 106.7,255.3 106.0,251.9 C105.3,248.5 102.6,243.5 101.5,239.7 C100.4,235.9 99.5,232.3 99.5,229.0 C99.5,225.7 99.8,222.2 101.5,219.8 C103.2,217.4 106.6,215.6 109.8,214.5 C113.0,213.4 116.4,213.3 120.5,213.4 C124.6,213.5 130.2,214.2 134.3,215.3 C138.4,216.4 140.9,217.7 145.0,219.8 C149.1,222.0 154.6,225.4 158.7,228.2 C162.8,231.0 166.2,234.2 169.4,236.6 C172.6,239.0 175.0,240.7 177.8,242.7 C179.1,238.6 180.3,234.8 181.6,230.5 C182.9,226.2 183.6,220.2 185.4,216.8 C187.2,213.4 189.9,211.3 192.3,209.9 C194.7,208.5 198.0,208.6 199.9,208.4 C201.8,208.2 201.8,207.8 203.5,209.0 C205.2,210.2 208.2,212.2 210.3,215.3 C212.5,218.4 214.8,222.4 216.4,227.5 C218.1,232.6 218.9,239.7 220.2,245.8 C224.5,240.7 229.2,234.3 233.2,230.5 C237.1,226.7 240.6,225.2 243.9,222.9 C247.2,220.6 249.4,218.7 253.0,216.8 C256.6,214.9 261.1,212.8 265.2,211.5 C269.3,210.2 273.3,209.2 277.4,208.9 C281.5,208.6 285.9,208.6 289.7,209.9 C293.5,211.2 297.9,213.6 300.3,216.8 C302.7,220.0 303.9,224.9 304.2,229.0 C304.5,233.1 304.1,236.6 301.9,241.2 C299.7,245.8 295.0,251.5 291.2,256.5 C287.4,261.5 283.1,266.3 279.0,271.2 C281.5,272.1 283.4,273.2 286.6,273.8 C289.8,274.4 293.7,274.1 298.2,274.5 C302.7,274.9 308.3,275.4 313.4,276.5 C318.5,277.6 324.2,278.9 328.7,280.9 C333.2,282.9 337.4,285.4 340.2,288.5 C343.0,291.6 345.1,295.9 345.3,299.4Z" fill="none" stroke="#000" stroke-width="1.05"/>
<path d="M582.0,299.5 C573.7,299.5 569.6,299.6 560.0,299.5 C550.4,299.4 536.2,299.8 524.5,299.2 C512.8,298.6 498.9,297.1 490.0,296.2 C481.1,295.3 476.7,294.7 471.0,293.8 C465.3,292.9 460.9,292.1 455.8,290.7 C450.7,289.3 445.1,287.5 440.5,285.6 C435.9,283.7 431.6,281.4 428.3,279.3 C425.0,277.2 422.2,274.4 420.7,272.8 C419.1,271.2 419.5,271.0 419.0,269.6 C418.5,268.2 418.2,266.0 417.8,264.2 C420.3,262.0 421.5,259.1 425.3,257.6 C429.1,256.1 435.4,255.5 440.5,255.1 C445.6,254.7 450.7,254.7 455.8,255.1 C460.9,255.5 467.0,256.9 471.0,257.6 C475.0,258.3 475.3,258.0 480.0,259.1 C484.7,260.2 492.6,262.4 499.0,264.2 C505.4,266.0 513.0,268.4 518.2,270.0 C523.4,271.6 526.3,272.7 530.3,274.1 C526.3,271.6 523.0,269.8 518.2,266.7 C513.4,263.6 506.4,258.8 501.6,255.3 C496.8,251.8 492.8,249.0 489.3,245.9 C485.8,242.8 482.9,240.2 480.4,237.0 C477.8,233.8 475.7,230.0 474.0,226.8 C472.3,223.6 470.6,220.7 470.2,217.9 C469.8,215.2 470.0,212.4 471.5,210.3 C473.0,208.2 475.5,205.9 479.1,205.2 C482.7,204.4 489.5,205.5 493.1,205.8 C496.7,206.1 497.7,206.2 500.7,207.1 C503.7,207.9 506.6,208.9 510.9,210.9 C515.1,212.9 521.1,216.1 526.2,219.2 C531.3,222.3 535.8,225.1 541.4,229.3 C547.0,233.5 554.8,240.4 560.0,244.6 C565.2,248.8 568.5,251.1 572.8,254.3 C576.2,252.5 578.9,249.8 582.9,248.9 C586.9,248.0 592.5,250.3 596.6,248.9 C600.7,247.5 601.9,243.8 607.3,240.5 C612.6,237.2 621.3,232.5 628.7,229.1 C636.1,225.7 645.2,221.6 651.6,219.9 C658.0,218.2 663.1,218.6 666.9,219.2 C670.7,219.8 673.0,221.4 674.5,223.7 C676.0,226.0 677.3,228.3 676.0,232.9 C674.7,237.5 671.0,246.1 666.9,251.2 C662.8,256.3 658.0,259.0 651.6,263.4 C645.2,267.8 636.3,272.8 628.6,277.5 C633.4,275.5 636.7,273.3 642.9,271.4 C649.1,269.5 658.2,267.5 665.8,266.0 C673.4,264.5 682.1,263.1 688.7,262.5 C695.3,261.9 700.9,261.7 705.5,262.2 C710.1,262.7 713.7,263.6 716.2,265.3 C718.8,267.0 720.5,269.7 720.8,272.1 C721.0,274.5 720.2,277.4 717.7,279.8 C715.2,282.2 711.6,284.3 705.5,286.6 C699.4,288.9 688.9,291.7 681.0,293.5 C673.1,295.3 665.1,296.3 658.2,297.3 C651.3,298.3 647.8,299.0 639.8,299.4 C631.8,299.8 619.6,299.5 610.0,299.5 C600.4,299.5 590.3,299.5 582.0,299.5Z" fill="none" stroke="#000" stroke-width="1.05"/>
<rect x="579.5" y="296.5" width="5" height="5" fill="#808080"/>
<circle cx="424" cy="275.8" r="3.3" fill="#fff" stroke="#e00000" stroke-width="2.6"/>
</svg>
<div style="position:absolute;left:0;top:0;z-index:5">
<!-- checkbox -->
<div class="abs" style="left:20px;top:111px;width:13px;height:13px;border:1px solid #8f8f8f;background:#fff"><div class="abs" style="left:1px;top:1px;width:9px;height:9px;background:linear-gradient(135deg,#cbcbcb,#f4f4f4)"></div></div>
<div class="abs" style="left:36.5px;top:111px;font-size:12.7px;line-height:15px;white-space:nowrap">+90 dg</div>
<div class="hdr" style="top:104px">Elevation angle = 170dg</div>
<div class="hdr" style="top:121px">Ga = 9.5 dBi</div>
<div class="hdr" style="top:138px">Gmax - Ga = 0.9 dB</div>
<div class="lbl" style="left:172.0px;top:160.5px">0</div>
<div class="lbl" style="left:172.0px;top:182.9px">-3</div>
<div class="lbl" style="left:172.0px;top:222.4px">-10</div>
<div class="lbl" style="left:172.0px;top:257.3px">-20</div>
<div class="lbl" style="left:172.0px;top:276.8px">-30</div>
<div class="lbl" style="left:172.0px;top:139.0px">Y</div>
<div class="lblx" style="left:375.5px;top:291.5px">X</div>
<div class="lbl" style="left:552.0px;top:160.5px">0</div>
<div class="lbl" style="left:552.0px;top:182.9px">-3</div>
<div class="lbl" style="left:552.0px;top:222.4px">-10</div>
<div class="lbl" style="left:552.0px;top:257.3px">-20</div>
<div class="lbl" style="left:552.0px;top:276.8px">-30</div>
<div class="lbl" style="left:552.0px;top:139.0px">Z</div>
<div class="lblx" style="left:752.5px;top:291.5px">X</div>
<div class="info" style="top:304px">Ga : 10.4 dBi = 0 dB&nbsp;&nbsp; (Horizontal polarization)</div>
<div class="info" style="top:321px">F/B: -2.95 dB; Rear: Azim. 120 dg,&nbsp;&nbsp; Elev. 60 dg</div>
<div class="info" style="top:338px">Freq: 14.250 MHz</div>
<div class="info" style="top:355px">Z: 241.158 - j33.831 Ohm</div>
<div class="info" style="top:372px">SWR: 1.3 (200.0 Ohm),</div>
<div class="info" style="top:389px">Elev: 14.0 dg (Real GND&nbsp; :21.00 m height)</div>
<!-- bottom controls -->
<div class="btn" style="left:20px;width:154px;border-color:#2c7ca4;box-shadow:inset 0 0 0 1px #a4ecfc;background:linear-gradient(to bottom,#f4f4f4 0,#ececec 45%,#dcdcdc 50%,#d6d8da 100%)">Elevation</div>
<div class="btn" style="left:188px;width:110px">3D FF</div>
<div class="btn" style="left:682px;width:83px">Print</div>
<div class="abs" style="left:319px;top:504px;width:343px;height:32px;border:1px solid #a8a8a8;box-shadow:inset 1px 1px 0 #fff,1px 1px 0 #fff"></div>
<div class="abs" style="left:325px;top:497px;padding:0 2px;background:#f0f0f0;font-size:13px;line-height:15px">Field(s)</div>
<div class="radio" style="left:327px"></div><div class="rl" style="left:343px">V</div>
<div class="radio" style="left:410px"></div><div class="rl" style="left:426px">H</div>
<div class="radio" style="left:493.5px;background:radial-gradient(circle at 50% 50%,#1d5a90 0,#2c7ab8 35%,#e8eef4 45%,#dfe3e8 100%)"></div><div class="rl" style="left:509.5px">Total</div>
<div class="radio" style="left:576.5px"></div><div class="rl" style="left:591.5px">V+H</div>
</div>
</body></html>
